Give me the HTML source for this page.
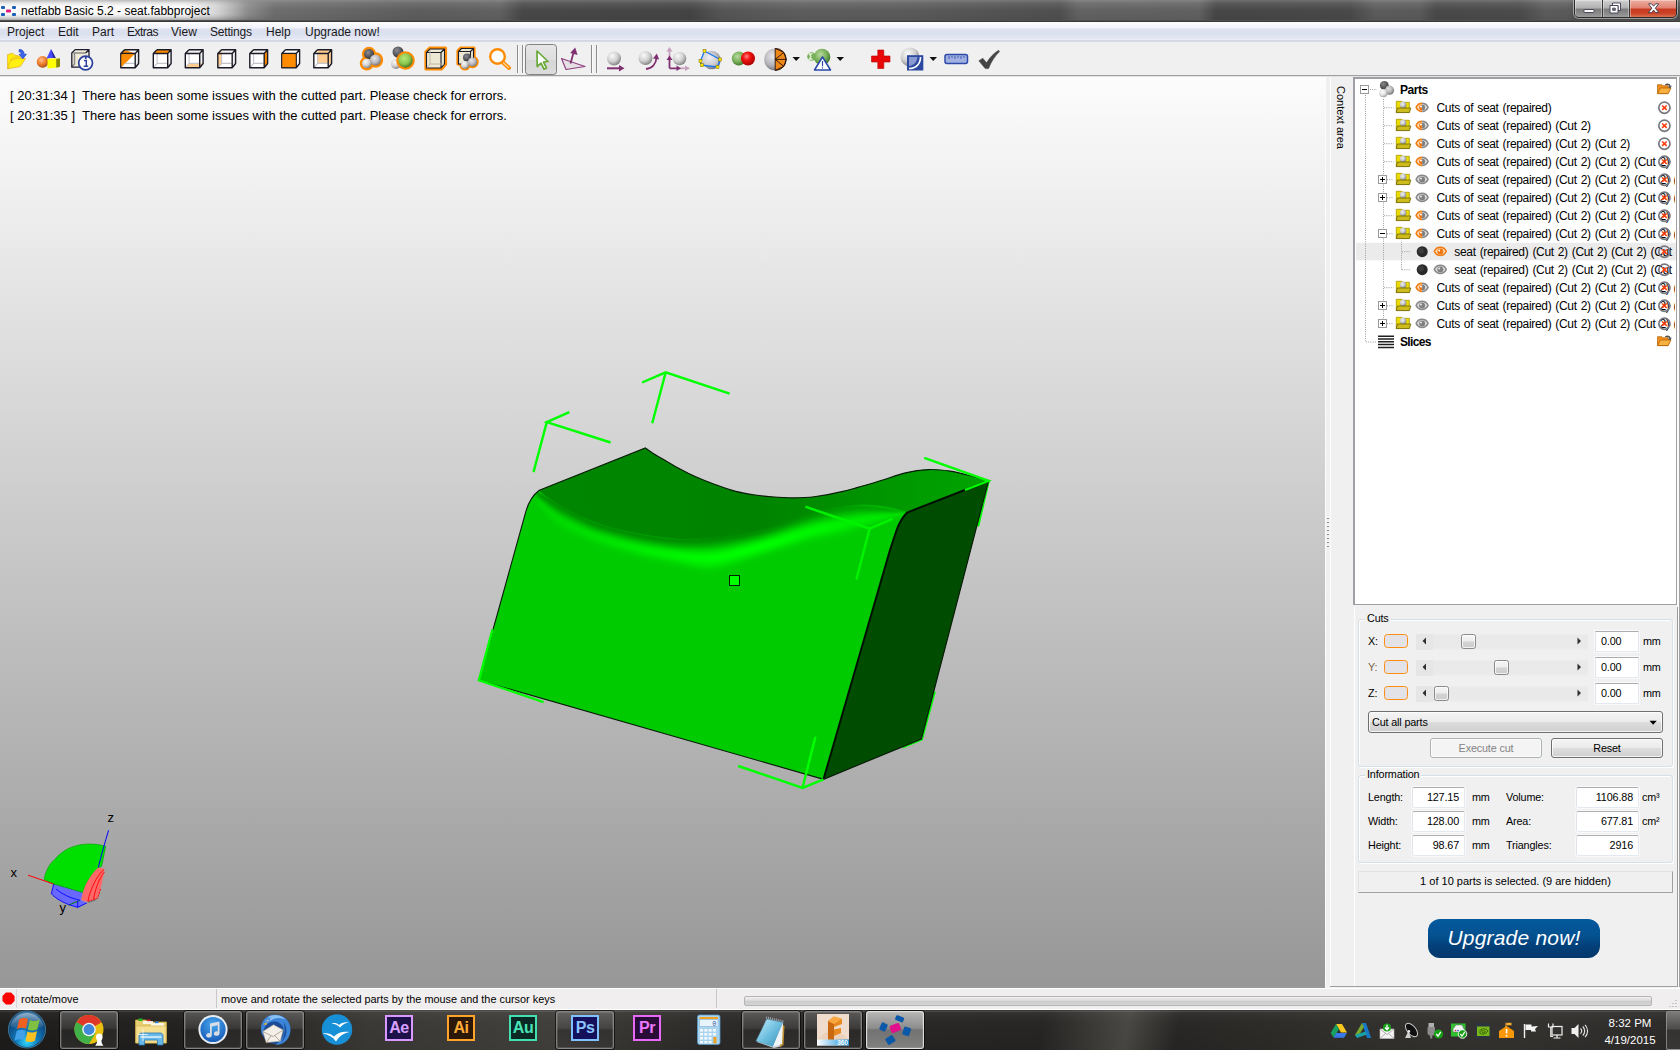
<!DOCTYPE html>
<html><head><meta charset="utf-8"><title>netfabb Basic 5.2 - seat.fabbproject</title>
<style>
*{box-sizing:border-box;margin:0;padding:0}
html,body{width:1680px;height:1050px;overflow:hidden;background:#f0f0f0;font-family:"Liberation Sans",sans-serif;font-size:12px;color:#000}
.abs{position:absolute}
#titlebar{position:absolute;left:0;top:0;width:1680px;height:22px;overflow:hidden;background:linear-gradient(90deg,#909090 0,#8e8e8e 215px,#707070 250px,#686868 330px,#5e5e5e 420px,#626262 500px,#494949 522px,#454545 690px,#565656 722px,#5e5e5e 800px,#5c5c5c 900px,#545454 1000px,#505050 1060px,#636363 1078px,#616161 1200px,#474747 1216px,#4a4a4a 1350px,#5d5d5d 1376px,#5b5b5b 1420px,#4a4a4a 1436px,#4c4c4c 1520px,#5d5d5d 1546px,#5b5b5b 1568px,#4b4b4b 1580px,#505050 1680px)}
#titlebar .shade{position:absolute;left:0;top:0;width:1680px;height:22px;background:linear-gradient(180deg,rgba(255,255,255,.22) 0,rgba(255,255,255,.10) 3px,rgba(255,255,255,0) 10px,rgba(0,0,0,.06) 19px)}#titlebar .glow{position:absolute;left:0;top:0;width:290px;height:20px;background:linear-gradient(90deg,rgba(255,255,255,.95) 0,rgba(255,255,255,.95) 185px,rgba(255,255,255,.62) 218px,rgba(255,255,255,.22) 245px,rgba(255,255,255,0) 275px);-webkit-mask-image:linear-gradient(180deg,rgba(0,0,0,.25) 0,rgba(0,0,0,.8) 3px,#000 6px,#000 14px,rgba(0,0,0,.75) 17px,rgba(0,0,0,.3) 20px);mask-image:linear-gradient(180deg,rgba(0,0,0,.25) 0,rgba(0,0,0,.8) 3px,#000 6px,#000 14px,rgba(0,0,0,.75) 17px,rgba(0,0,0,.3) 20px)}
#titlebar .line{position:absolute;left:0;top:20px;width:1680px;height:2px;background:linear-gradient(180deg,#5a5a5a,#2e2e2e)}
#title{position:absolute;left:21px;top:4px;font-size:12px;letter-spacing:0px;color:#000;white-space:nowrap}
#menubar{position:absolute;left:0;top:22px;width:1680px;height:20px;background:linear-gradient(180deg,#fdfdfe 0,#f1f3fa 6px,#dde1f0 7px,#dbe0ef 12px,#e6e9f5 17px,#eef0f8 18px,#b8bfd0 19px,#f4f4f6 20px)}
#menubar span{position:absolute;top:3px;font-size:12px;white-space:nowrap;color:#1a1a1a}
#toolbar{position:absolute;left:0;top:42px;width:1680px;height:35px;background:#f0f0f0}
#toolbar .bl{position:absolute;left:0;top:33px;width:1680px;height:1px;background:#a0a0a0}
#toolbar .bl2{position:absolute;left:0;top:34px;width:1680px;height:1px;background:#e3e3e3}
#viewport{position:absolute;left:0;top:77px;width:1325px;height:910px;background:linear-gradient(180deg,#fcfcfc 0,#979797 100%);overflow:hidden}
.log{position:absolute;left:10px;font-size:13px;white-space:nowrap;color:#000}
#rpanel{position:absolute;left:1325px;top:77px;width:355px;height:911px;background:#f0f0f0}
#status{position:absolute;left:0;top:987px;width:1680px;height:23px;background:#f0eeee}
#taskbar{position:absolute;left:0;top:1010px;width:1680px;height:40px;background:#1b1917}
</style></head><body>
<div id="titlebar"><div class="shade"></div><div class="glow"></div>
<svg class="abs" style="left:1px;top:5px" width="16" height="12" viewBox="0 0 16 12">
<rect x="0" y="1" width="4" height="3" rx="1" fill="#1d5fb5"/><rect x="11" y="1" width="4" height="3" rx="1" fill="#1d5fb5"/>
<rect x="0" y="8" width="4" height="3" rx="1" fill="#1d5fb5"/><rect x="11" y="8" width="4" height="3" rx="1" fill="#1d5fb5"/>
<rect x="5" y="4.5" width="5" height="3" rx="1" fill="#e0197d"/></svg>
<div id="title">netfabb Basic 5.2 - seat.fabbproject</div>
<div class="line"></div>
<div class="abs" style="left:1574px;top:-1px;width:103px;height:19px;border:1px solid #2a2a2a;border-radius:0 0 5px 5px;box-shadow:0 0 0 1px rgba(255,255,255,.45);overflow:hidden">
<div class="abs" style="left:0;top:0;width:28px;height:18px;background:linear-gradient(180deg,#d0d0d0 0,#b0b0b0 45%,#7c7c7c 50%,#8e8e8e 80%,#a4a4a4 100%);border-right:1px solid #3a3a3a;box-shadow:inset 0 0 0 1px rgba(255,255,255,.35)"></div>
<div class="abs" style="left:28px;top:0;width:27px;height:18px;background:linear-gradient(180deg,#d0d0d0 0,#b0b0b0 45%,#7c7c7c 50%,#8e8e8e 80%,#a4a4a4 100%);border-right:1px solid #3a3a3a;box-shadow:inset 0 0 0 1px rgba(255,255,255,.35)"></div>
<div class="abs" style="left:55px;top:0;width:47px;height:18px;background:linear-gradient(180deg,#eeb0a0 0,#e08070 45%,#c83820 50%,#cc4428 75%,#e08060 100%);box-shadow:inset 0 0 0 1px rgba(255,255,255,.35)"></div>
<svg class="abs" style="left:0;top:0" width="102" height="18" viewBox="1575 0 102 18">
<rect x="1584" y="9.5" width="10" height="3" rx="0.5" fill="#fff" stroke="#3c3c50" stroke-width="0.9"/>
<path d="M1612.5 3 H1620.5 V10.5 H1618 V5.5 H1612.5 Z" fill="#fff" stroke="#3c3c50" stroke-width="0.9"/><path d="M1610 5.5 H1618 V13 H1610 Z M1612.7 8.2 V10.3 H1615.3 V8.2 Z" fill="#fff" fill-rule="evenodd" stroke="#3c3c50" stroke-width="0.9"/>
<path d="M1648.5 3.8 L1651.6 3.8 L1653.6 6.2 L1655.6 3.8 L1658.7 3.8 L1655.3 8.2 L1658.8 12.6 L1655.6 12.6 L1653.6 10.1 L1651.6 12.6 L1648.4 12.6 L1651.9 8.2 Z" fill="#fff" stroke="#3c3c50" stroke-width="0.9" stroke-linejoin="round"/>
</svg></div>
</div>
<div id="menubar">
<span style="left:7px">Project</span><span style="left:58px">Edit</span><span style="left:92px">Part</span><span style="left:127px;letter-spacing:-0.5px">Extras</span><span style="left:171px">View</span><span style="left:210px;letter-spacing:-0.2px">Settings</span><span style="left:266px">Help</span><span style="left:305px">Upgrade now!</span>
</div>
<div id="toolbar"><div class="bl"></div><div class="bl2"></div>
<svg class="abs" style="left:0;top:0" width="1020" height="35" viewBox="0 42 1020 35">
<defs>
<radialGradient id="gsW" cx="0.38" cy="0.32" r="0.72"><stop offset="0" stop-color="#fafafa"/><stop offset="0.55" stop-color="#d0d0d0"/><stop offset="1" stop-color="#7c7c7c"/></radialGradient>
<radialGradient id="gsG" cx="0.4" cy="0.35" r="0.7"><stop offset="0" stop-color="#e8e8ec"/><stop offset="0.6" stop-color="#b4b4ba"/><stop offset="1" stop-color="#6c6c74"/></radialGradient>
<radialGradient id="gsD" cx="0.4" cy="0.35" r="0.7"><stop offset="0" stop-color="#8a8a92"/><stop offset="0.6" stop-color="#55555c"/><stop offset="1" stop-color="#2c2c32"/></radialGradient>
<radialGradient id="gsGreen" cx="0.4" cy="0.35" r="0.7"><stop offset="0" stop-color="#b8e878"/><stop offset="0.55" stop-color="#8cc850"/><stop offset="1" stop-color="#3c6c20"/></radialGradient>
<radialGradient id="gsGreen2" cx="0.4" cy="0.35" r="0.7"><stop offset="0" stop-color="#b8d8a0"/><stop offset="0.55" stop-color="#78b058"/><stop offset="1" stop-color="#3c7028"/></radialGradient>
<radialGradient id="gsRed" cx="0.4" cy="0.35" r="0.7"><stop offset="0" stop-color="#ff8080"/><stop offset="0.4" stop-color="#f01010"/><stop offset="1" stop-color="#a00000"/></radialGradient>
<radialGradient id="gsOr" cx="0.4" cy="0.35" r="0.7"><stop offset="0" stop-color="#ffc090"/><stop offset="0.5" stop-color="#f08030"/><stop offset="1" stop-color="#a04810"/></radialGradient>
<linearGradient id="btnsel" x1="0" y1="0" x2="0" y2="1"><stop offset="0" stop-color="#e6e6e6"/><stop offset="0.5" stop-color="#dedede"/><stop offset="0.5" stop-color="#d6d6d6"/><stop offset="1" stop-color="#dcdcdc"/></linearGradient>
<g id="cube">
<path d="M4.6 5 V14.4 H14.6 M4.6 14.4 L1.4 18.2" fill="none" stroke="#c4c4cc" stroke-width="1.1"/>
<path d="M0.8 4.5 H15.2 V18.8 H0.8 Z M4.5 0.8 H18.6 V14.5 L15.2 18.8 M0.8 4.5 L4.5 0.8 M15.2 4.5 L18.6 0.8" fill="none" stroke="#1c1c28" stroke-width="1.4" stroke-linejoin="round"/>
</g>
</defs>
<!-- open folder -->
<g>
<path d="M7.6 54.6 L12.8 53.2 L14.6 55.2 L20.2 56.2 V60 L9.5 68.6 H7.6 Z" fill="#ffee08" stroke="#e8b428" stroke-width="0.8" stroke-linejoin="round"/>
<path d="M7.6 68.7 L10.6 60.4 L17.5 58.2 L25.6 58.6 L20.2 66.6 Z" fill="#fff010" stroke="#e8b428" stroke-width="0.8" stroke-linejoin="round"/>
<path d="M10.6 60.4 L12 58 L18.5 56.5" fill="none" stroke="#e8b428" stroke-width="0.7"/>
<path d="M19.2 49.6 C22.4 49.4 24 51.2 24 54.2 L26.4 54.2 L22.8 58.8 L19.2 54.2 L21.4 54.2 C21.4 52.6 20.8 52 19.2 52 Z" fill="#3c68f0" stroke="#1838c0" stroke-width="0.7" stroke-linejoin="round"/>
</g>
<!-- shapes -->
<g>
<path d="M51 49 L56 58.5 H46.5 Z" fill="#4848f8"/><path d="M51 49 L56 58.5 H53.5 Z" fill="#282890"/>
<circle cx="42.6" cy="61.8" r="5.9" fill="url(#gsOr)"/>
<path d="M47.5 59 L56.2 58.2 V67.8 L47.5 68.4 Z" fill="#ffff00"/><path d="M56.2 58.2 L60 58.6 V66.8 L56.2 67.8 Z" fill="#888800"/><path d="M47.5 59 L51 58 L60 58.6 L56.2 58.9 Z" fill="#ffff70"/>
</g>
<!-- box info -->
<g>
<path d="M71.8 53 L75.2 49.6 H89 V63.4 L85.4 67.2 H71.8 Z" fill="#f0ecd8"/>
<path d="M73.2 53 H85.6 M74.5 53 V64 L72.2 66.6" fill="none" stroke="#8c8c8c" stroke-width="1.5"/>
<path d="M71.8 53 L75.2 49.6 H89 V63.4 L85.4 67.2 H71.8 Z M85.6 53 L89 49.6" fill="none" stroke="#1c1c30" stroke-width="1.3" stroke-linejoin="round"/>
<circle cx="85.6" cy="63" r="6.9" fill="#fff" stroke="#2c409c" stroke-width="1.7"/>
<path d="M84 60.6 H86.3 V66 M83.6 66.2 H88.2" stroke="#2c409c" stroke-width="1.5" fill="none"/><circle cx="85.8" cy="57.9" r="1.1" fill="#2c409c"/>
</g>
<!-- cubes -->
<g transform="translate(120 49)"><path d="M0.8 4.5 H15.2 V18.8 H0.8 Z" fill="#fff"/><path d="M0.8 4.5 H15.2 L18.6 0.8 H4.5 Z" fill="#fff"/><path d="M0.8 4.5 L4.5 0.8 L15.2 4.5 L0.8 18.8 Z" fill="#ff8c00"/><use href="#cube"/><path d="M1.5 5.2 H13.8 L1.5 17.6 Z" fill="#ff8c00"/></g>
<g transform="translate(152.5 49)"><path d="M0.8 4.5 H15.2 V18.8 H0.8 Z" fill="#fff"/><path d="M0.8 4.5 L4.5 0.8 H18.6 L15.2 4.5 Z" fill="#ff8c00"/><use href="#cube"/></g>
<g transform="translate(184.5 49)"><path d="M0.8 4.5 H15.2 V18.8 H0.8 Z" fill="#fff"/><path d="M0.8 18.8 L4.5 14.5 H18.6 L15.2 18.8 Z" fill="#ffcc90"/><use href="#cube"/></g>
<g transform="translate(217 49)"><path d="M0.8 4.5 H15.2 V18.8 H0.8 Z" fill="#fff"/><path d="M0.8 4.5 L4.5 0.8 V14.5 L0.8 18.8 Z" fill="#ffcc90"/><use href="#cube"/></g>
<g transform="translate(249 49)"><path d="M0.8 4.5 H15.2 V18.8 H0.8 Z" fill="#fff"/><path d="M15.2 4.5 L18.6 0.8 V14.5 L15.2 18.8 Z" fill="#ff8c00"/><use href="#cube"/></g>
<g transform="translate(281 49)"><path d="M0.8 4.5 H15.2 V18.8 H0.8 Z" fill="#ff8c00"/><path d="M0.8 4.5 L4.5 0.8 H18.6 V14.5 L15.2 18.8 V4.5 Z" fill="#fff"/><use href="#cube"/><path d="M1.5 5.2 H14.5 V18.1 H1.5 Z" fill="#ff8c00"/></g>
<g transform="translate(313 49)"><path d="M0.8 4.5 H15.2 V18.8 H0.8 Z" fill="#fff"/><path d="M4.5 0.8 H18.6 V14.5 H4.5 Z" fill="#ffcc90"/><use href="#cube"/></g>
<!-- zoom all: 3 spheres w/ orange outline -->
<g>
<circle cx="369" cy="54" r="7.2" fill="#ff8c00"/><circle cx="375.5" cy="60" r="7.7" fill="#ff8c00"/><circle cx="366.8" cy="63.5" r="7" fill="#ff8c00"/>
<circle cx="369" cy="54" r="5" fill="url(#gsD)"/><circle cx="375.5" cy="60" r="5.5" fill="url(#gsG)"/><circle cx="366.8" cy="63.5" r="4.8" fill="url(#gsW)"/>
</g>
<g>
<circle cx="398" cy="52" r="5.5" fill="url(#gsD)"/><circle cx="396" cy="64" r="5" fill="url(#gsW)"/>
<circle cx="405.5" cy="60.5" r="9.3" fill="#ff8c00"/><circle cx="405.5" cy="60.5" r="7.2" fill="url(#gsGreen)"/>
</g>
<!-- cube orange outline -->
<g>
<path d="M426 52 L430 48 H445.5 V64.5 L441.5 69 H426 Z" fill="#ece8d4" stroke="#ff8c00" stroke-width="3.2" stroke-linejoin="round"/>
<path d="M426.5 52.5 H441 V68 H426.5 Z M426.5 52.5 L430 49 H444.5 V64 L441 68 M441 52.5 L444.5 49" fill="#ece8d4" stroke="#1c1c28" stroke-width="1.1" stroke-linejoin="round"/>
<path d="M430 49.5 V64 H444 M430 64 L427 67.5" fill="none" stroke="#b8b4a0" stroke-width="0.9"/>
</g>
<g>
<path d="M458 51 L461 48 H474 V60 L471 64 H458 Z" fill="#ece8d4" stroke="#ff8c00" stroke-width="3.2" stroke-linejoin="round"/>
<circle cx="467" cy="57.5" r="5.6" fill="#ff8c00"/><circle cx="472.5" cy="62" r="6.2" fill="#ff8c00"/><circle cx="465" cy="65" r="5.6" fill="#ff8c00"/>
<path d="M458.5 51.5 H470.5 V64 H458.5 Z M458.5 51.5 L461.5 48.5 H473.5 V60.5 L470.5 64 M470.5 51.5 L473.5 48.5" fill="#ece8d4" stroke="#1c1c28" stroke-width="1.1" stroke-linejoin="round"/>
<circle cx="467" cy="57.5" r="4" fill="url(#gsD)"/><circle cx="472.5" cy="62" r="4.6" fill="url(#gsG)"/><circle cx="465" cy="65" r="4" fill="url(#gsW)"/>
</g>
<!-- magnifier -->
<g><circle cx="497.5" cy="56.5" r="7.3" fill="#fdfdfb" stroke="#ff8c00" stroke-width="2.4"/><path d="M503 62.5 L509 68" stroke="#ff8c00" stroke-width="4" stroke-linecap="round"/><path d="M503.6 63 L508.6 67.6" stroke="#ffd8a0" stroke-width="1.2" stroke-linecap="round"/></g>
<!-- separators -->
<path d="M517.5 45 V73 M522.5 45 V73" stroke="#8c8c8c" stroke-width="1"/>
<path d="M518.5 45 V73 M523.5 45 V73" stroke="#fafafa" stroke-width="1"/>
<!-- selected btn -->
<rect x="525.5" y="44.5" width="31" height="30" rx="3" fill="url(#btnsel)" stroke="#828282" stroke-width="1"/>
<path d="M537 51 L548 61.5 L543.5 62 L546.5 68 L544 69.2 L541 63.2 L537.2 66.5 Z" fill="#fff" stroke="#68a838" stroke-width="1.7" stroke-linejoin="round"/>
<!-- align -->
<g><path d="M561.5 58.5 L585 66.5 L566 69.5 Z" fill="#e4e0e4" stroke="#904080" stroke-width="1.2" stroke-linejoin="round"/><path d="M570.5 63.5 L574 51" stroke="#803070" stroke-width="1.8"/><path d="M575.2 47.5 L577.6 55 L570.2 53 Z" fill="#803070"/></g>
<path d="M591.5 45 V73 M596.5 45 V73" stroke="#8c8c8c" stroke-width="1"/>
<path d="M592.5 45 V73 M597.5 45 V73" stroke="#fafafa" stroke-width="1"/>
<!-- move -->
<g><circle cx="614" cy="58.5" r="7" fill="url(#gsW)"/><path d="M607 68.3 H620" stroke="#803070" stroke-width="2"/><path d="M619 65 L624.5 68.3 L619 71.5 Z" fill="#803070"/></g>
<!-- rotate -->
<g><circle cx="645.5" cy="58" r="7" fill="url(#gsW)"/><path d="M646 69 C652 68.5 656 64 656.5 58" fill="none" stroke="#803070" stroke-width="1.8"/><path d="M653 58.5 L656.8 53.5 L659.2 59.5 Z" fill="#803070"/></g>
<!-- scale -->
<g><path d="M669.5 58 V50" stroke="#c8a0c0" stroke-width="1.8"/><path d="M666.5 51.5 L669.5 47 L672.5 51.5 Z" fill="#c8a0c0"/><path d="M678 68.3 H686" stroke="#c8a0c0" stroke-width="1.8"/><path d="M685 65.5 L690 68.3 L685 71 Z" fill="#c8a0c0"/>
<circle cx="679.5" cy="58.5" r="6.8" fill="url(#gsW)"/>
<path d="M669.5 68.3 V59 M669.5 68.3 H678" stroke="#803070" stroke-width="1.8" fill="none"/><path d="M666.5 60 L669.5 55.5 L672.5 60 Z" fill="#803070"/><path d="M676.5 65.5 L681 68.3 L676.5 71 Z" fill="#803070"/></g>
<!-- polygon select -->
<g><circle cx="711.5" cy="60" r="9.3" fill="url(#gsG)"/><path d="M704.5 51 L720 59.5 L717.5 67 L702 65.2 L700.5 61 Z" fill="rgba(255,255,255,.35)" stroke="#1878f0" stroke-width="1.3"/>
<g fill="#f8e800" stroke="#806800" stroke-width="0.5"><rect x="703" y="49.5" width="3" height="3"/><rect x="718.5" y="58" width="3" height="3"/><rect x="716" y="65.5" width="3" height="3"/><rect x="700.5" y="63.7" width="3" height="3"/><rect x="699" y="59.5" width="3" height="3"/></g></g>
<!-- green red -->
<g><circle cx="738.8" cy="58.5" r="7" fill="url(#gsGreen2)"/><circle cx="748" cy="58.5" r="7" fill="url(#gsRed)"/></g>
<!-- half sphere orange -->
<g><circle cx="775.2" cy="59.4" r="11" fill="url(#gsG)"/><path d="M775.2 48.4 A11 11 0 0 1 775.2 70.4 Z" fill="#f08818"/><path d="M775.2 48.4 V70.4 M775.2 48.4 A11 11 0 0 1 775.2 70.4 M775.2 59.4 L783.8 52.4 M775.2 59.4 L786.2 59.4 M775.2 59.4 L783.8 66.4 M775.2 48.4 L783.8 52.4 L786.2 59.4 L783.8 66.4 L775.2 70.4" fill="none" stroke="#201008" stroke-width="0.9"/></g>
<path d="M792.5 57 H800 L796.2 61 Z" fill="#101010"/>
<!-- green sphere warn -->
<g><circle cx="822" cy="57" r="8.3" fill="url(#gsGreen2)"/><circle cx="811.5" cy="56.5" r="4.3" fill="#78b058"/><path d="M812.5 53.8 H809.2 L811 56.5 L809.2 59.2 H812.5" fill="none" stroke="#f0f8e8" stroke-width="1.2"/><path d="M822.5 57 L830.5 70 H814.5 Z" fill="#fff" stroke="#2848a8" stroke-width="1.5" stroke-linejoin="round"/><path d="M822.5 61 V66.2 M822.5 67.3 V68.6" stroke="#2848a8" stroke-width="1.2"/></g>
<path d="M836.5 57 H844 L840.2 61 Z" fill="#101010"/>
<!-- red cross -->
<path d="M877.8 50 H883.8 V56 H890 V62 H883.8 V68.5 H877.8 V62 H871.5 V56 H877.8 Z" fill="#e80808" stroke="#b80000" stroke-width="0.6"/>
<!-- sphere blue square -->
<g><circle cx="910" cy="57" r="9.5" fill="url(#gsW)"/><rect x="907" y="55.2" width="16.3" height="15.3" fill="#2c48a0"/><path d="M909 68.5 C916 68.5 920.5 64 920.5 57" fill="none" stroke="#fff" stroke-width="1.6"/><path d="M909 57 H917.5 C917 62 914 65.5 909 66 Z" fill="#8898d0"/></g>
<path d="M929.5 57 H937 L933.2 61 Z" fill="#101010"/>
<!-- ruler -->
<g><rect x="945" y="54.6" width="22.5" height="9" rx="2" fill="#a0b0e0" stroke="#2c48a8" stroke-width="1.5"/><path d="M949 56 V59 M952 56 V58 M955 56 V59 M958 56 V58 M961 56 V59 M964 56 V58" stroke="#2c48a8" stroke-width="0.8"/></g>
<!-- check -->
<path d="M978.8 60.8 L982.8 58.2 L986.6 62.8 C989.6 57.5 993.6 53.2 998.6 50.2 L999.6 51.6 C995 56 991 62 988.6 68.6 L985.2 68.6 Z" fill="#444" stroke="#444" stroke-width="0.5" stroke-linejoin="round"/>
</svg>
</div>
<div id="viewport">
<div class="log" style="top:11px">[ 20:31:34 ]&nbsp; There has been some issues with the cutted part. Please check for errors.</div>
<div class="log" style="top:31px">[ 20:31:35 ]&nbsp; There has been some issues with the cutted part. Please check for errors.</div>
<svg class="abs" style="left:0;top:0" width="1325" height="910" viewBox="0 77 1325 910">
<defs>
<clipPath id="mclip"><path id="sil" d="M539.3 490.3 L645.4 447.9 C647.0 449.0 651.6 452.4 655.0 454.5 C658.4 456.6 661.5 458.3 665.7 460.7 C669.9 463.1 675.0 466.3 680.0 469.0 C685.0 471.7 689.9 474.2 695.7 476.8 C701.5 479.4 708.3 482.1 715.0 484.5 C721.7 486.9 729.0 489.6 735.7 491.4 C742.4 493.1 749.0 494.1 755.0 495.0 C761.0 495.9 765.1 496.3 771.4 496.8 C777.7 497.3 785.8 497.9 792.9 497.9 C800.0 497.9 806.0 497.9 814.3 496.8 C822.6 495.7 832.2 494.0 842.9 491.4 C853.6 488.8 868.2 484.4 878.6 481.3 C889.0 478.2 897.1 474.8 905.4 472.9 C913.7 470.9 921.2 469.9 928.6 469.6 C936.0 469.3 942.9 470.1 950.0 471.1 C957.1 472.2 965.0 474.3 971.4 475.9 C977.8 477.5 985.7 480.0 988.6 480.8 L962.8 580 L921.4 739 L823.5 779.3 L478.9 680.3 L506 583 L525.4 513.2 C528 503 533 495 539.3 490.3 Z"/></clipPath>
<filter id="bl1" x="-5%" y="-5%" width="110%" height="110%"><feGaussianBlur stdDeviation="0.9"/></filter><filter id="bl3" x="-10%" y="-10%" width="120%" height="120%"><feGaussianBlur stdDeviation="3"/></filter>
<filter id="bl2" x="-10%" y="-10%" width="120%" height="120%"><feGaussianBlur stdDeviation="1.6"/></filter>
<filter id="bl5" x="-10%" y="-10%" width="120%" height="120%"><feGaussianBlur stdDeviation="5"/></filter>
<linearGradient id="topg" x1="540" y1="0" x2="990" y2="0" gradientUnits="userSpaceOnUse"><stop offset="0" stop-color="#008600"/><stop offset="0.5" stop-color="#008400"/><stop offset="0.68" stop-color="#009000"/><stop offset="0.85" stop-color="#009c00"/><stop offset="1" stop-color="#00a400"/></linearGradient>
<linearGradient id="bg0" x1="537" y1="0" x2="907" y2="0" gradientUnits="userSpaceOnUse"><stop offset="0.000" stop-color="rgb(0,135,0)"/><stop offset="0.170" stop-color="rgb(0,135,0)"/><stop offset="0.305" stop-color="rgb(0,135,0)"/><stop offset="0.441" stop-color="rgb(0,135,0)"/><stop offset="0.603" stop-color="rgb(0,135,0)"/><stop offset="0.792" stop-color="rgb(0,147,0)"/><stop offset="1.000" stop-color="rgb(0,161,0)"/></linearGradient><linearGradient id="bg1" x1="537" y1="0" x2="907" y2="0" gradientUnits="userSpaceOnUse"><stop offset="0.000" stop-color="rgb(0,141,0)"/><stop offset="0.170" stop-color="rgb(0,142,0)"/><stop offset="0.305" stop-color="rgb(0,144,0)"/><stop offset="0.441" stop-color="rgb(0,145,0)"/><stop offset="0.603" stop-color="rgb(0,145,0)"/><stop offset="0.792" stop-color="rgb(0,155,0)"/><stop offset="1.000" stop-color="rgb(0,166,0)"/></linearGradient><linearGradient id="bg2" x1="537" y1="0" x2="907" y2="0" gradientUnits="userSpaceOnUse"><stop offset="0.000" stop-color="rgb(0,153,0)"/><stop offset="0.170" stop-color="rgb(0,155,0)"/><stop offset="0.305" stop-color="rgb(0,158,0)"/><stop offset="0.441" stop-color="rgb(0,161,0)"/><stop offset="0.603" stop-color="rgb(0,162,0)"/><stop offset="0.792" stop-color="rgb(0,168,0)"/><stop offset="1.000" stop-color="rgb(0,175,0)"/></linearGradient><linearGradient id="bg3" x1="537" y1="0" x2="907" y2="0" gradientUnits="userSpaceOnUse"><stop offset="0.000" stop-color="rgb(0,167,0)"/><stop offset="0.170" stop-color="rgb(0,171,0)"/><stop offset="0.305" stop-color="rgb(0,177,0)"/><stop offset="0.441" stop-color="rgb(0,181,0)"/><stop offset="0.603" stop-color="rgb(0,183,0)"/><stop offset="0.792" stop-color="rgb(0,186,0)"/><stop offset="1.000" stop-color="rgb(0,187,0)"/></linearGradient><linearGradient id="bg4" x1="537" y1="0" x2="907" y2="0" gradientUnits="userSpaceOnUse"><stop offset="0.000" stop-color="rgb(0,181,0)"/><stop offset="0.170" stop-color="rgb(0,189,0)"/><stop offset="0.305" stop-color="rgb(0,196,0)"/><stop offset="0.441" stop-color="rgb(0,203,0)"/><stop offset="0.603" stop-color="rgb(0,206,0)"/><stop offset="0.792" stop-color="rgb(0,204,0)"/><stop offset="1.000" stop-color="rgb(0,199,0)"/></linearGradient><linearGradient id="bg5" x1="537" y1="0" x2="907" y2="0" gradientUnits="userSpaceOnUse"><stop offset="0.000" stop-color="rgb(0,195,0)"/><stop offset="0.170" stop-color="rgb(0,205,0)"/><stop offset="0.305" stop-color="rgb(0,215,0)"/><stop offset="0.441" stop-color="rgb(0,224,0)"/><stop offset="0.603" stop-color="rgb(0,227,0)"/><stop offset="0.792" stop-color="rgb(0,221,0)"/><stop offset="1.000" stop-color="rgb(0,211,0)"/></linearGradient><linearGradient id="bg6" x1="537" y1="0" x2="907" y2="0" gradientUnits="userSpaceOnUse"><stop offset="0.000" stop-color="rgb(0,207,0)"/><stop offset="0.170" stop-color="rgb(0,218,0)"/><stop offset="0.305" stop-color="rgb(0,230,0)"/><stop offset="0.441" stop-color="rgb(0,240,0)"/><stop offset="0.603" stop-color="rgb(0,244,0)"/><stop offset="0.792" stop-color="rgb(0,235,0)"/><stop offset="1.000" stop-color="rgb(0,220,0)"/></linearGradient><linearGradient id="bg7" x1="537" y1="0" x2="907" y2="0" gradientUnits="userSpaceOnUse"><stop offset="0.000" stop-color="rgb(0,213,0)"/><stop offset="0.170" stop-color="rgb(0,225,0)"/><stop offset="0.305" stop-color="rgb(0,238,0)"/><stop offset="0.441" stop-color="rgb(0,249,0)"/><stop offset="0.603" stop-color="rgb(0,254,0)"/><stop offset="0.792" stop-color="rgb(0,243,0)"/><stop offset="1.000" stop-color="rgb(0,225,0)"/></linearGradient><linearGradient id="bg8" x1="537" y1="0" x2="907" y2="0" gradientUnits="userSpaceOnUse"><stop offset="0.000" stop-color="rgb(0,214,0)"/><stop offset="0.170" stop-color="rgb(0,226,0)"/><stop offset="0.305" stop-color="rgb(0,239,0)"/><stop offset="0.441" stop-color="rgb(0,250,0)"/><stop offset="0.603" stop-color="rgb(0,254,0)"/><stop offset="0.792" stop-color="rgb(0,243,0)"/><stop offset="1.000" stop-color="rgb(0,226,0)"/></linearGradient><linearGradient id="bg9" x1="537" y1="0" x2="907" y2="0" gradientUnits="userSpaceOnUse"><stop offset="0.000" stop-color="rgb(0,212,0)"/><stop offset="0.170" stop-color="rgb(0,223,0)"/><stop offset="0.305" stop-color="rgb(0,234,0)"/><stop offset="0.441" stop-color="rgb(0,243,0)"/><stop offset="0.603" stop-color="rgb(0,247,0)"/><stop offset="0.792" stop-color="rgb(0,238,0)"/><stop offset="1.000" stop-color="rgb(0,223,0)"/></linearGradient><linearGradient id="bg10" x1="537" y1="0" x2="907" y2="0" gradientUnits="userSpaceOnUse"><stop offset="0.000" stop-color="rgb(0,210,0)"/><stop offset="0.170" stop-color="rgb(0,218,0)"/><stop offset="0.305" stop-color="rgb(0,226,0)"/><stop offset="0.441" stop-color="rgb(0,233,0)"/><stop offset="0.603" stop-color="rgb(0,236,0)"/><stop offset="0.792" stop-color="rgb(0,229,0)"/><stop offset="1.000" stop-color="rgb(0,218,0)"/></linearGradient><linearGradient id="bg11" x1="537" y1="0" x2="907" y2="0" gradientUnits="userSpaceOnUse"><stop offset="0.000" stop-color="rgb(0,208,0)"/><stop offset="0.170" stop-color="rgb(0,212,0)"/><stop offset="0.305" stop-color="rgb(0,217,0)"/><stop offset="0.441" stop-color="rgb(0,222,0)"/><stop offset="0.603" stop-color="rgb(0,223,0)"/><stop offset="0.792" stop-color="rgb(0,219,0)"/><stop offset="1.000" stop-color="rgb(0,212,0)"/></linearGradient><linearGradient id="bg12" x1="537" y1="0" x2="907" y2="0" gradientUnits="userSpaceOnUse"><stop offset="0.000" stop-color="rgb(0,206,0)"/><stop offset="0.170" stop-color="rgb(0,207,0)"/><stop offset="0.305" stop-color="rgb(0,210,0)"/><stop offset="0.441" stop-color="rgb(0,211,0)"/><stop offset="0.603" stop-color="rgb(0,212,0)"/><stop offset="0.792" stop-color="rgb(0,210,0)"/><stop offset="1.000" stop-color="rgb(0,207,0)"/></linearGradient><linearGradient id="bg13" x1="537" y1="0" x2="907" y2="0" gradientUnits="userSpaceOnUse"><stop offset="0.000" stop-color="rgb(0,204,0)"/><stop offset="0.170" stop-color="rgb(0,204,0)"/><stop offset="0.305" stop-color="rgb(0,205,0)"/><stop offset="0.441" stop-color="rgb(0,205,0)"/><stop offset="0.603" stop-color="rgb(0,205,0)"/><stop offset="0.792" stop-color="rgb(0,205,0)"/><stop offset="1.000" stop-color="rgb(0,204,0)"/></linearGradient></defs>
<path d="M988.7 480.8 L978 526.4 M934.7 691.5 L921.8 739.4 L902.3 747.5" fill="none" stroke="#00ff00" stroke-width="2.4"/>
<g clip-path="url(#mclip)">
<rect x="470" y="440" width="530" height="350" fill="#00cb00"/>
<!-- top surface -->
<path d="M530 440 H1000 V500 L907 512.5 C895 508 875 504 858 505 C845 506 830 509 815 513 C795 520 775 528 750 533 C730 537 700 540 680 539 C660 538 620 531 600 524 C580 517 560 507 539 491 Z" fill="url(#topg)"/>
<!-- transition -->
<g filter="url(#bl1)">
<path d="M537.0 491.7 L542.0 494.4 L547.0 497.1 L552.0 500.1 L557.0 503.0 L562.0 505.8 L567.0 508.5 L572.0 511.2 L577.0 513.7 L582.0 516.2 L587.0 518.7 L592.0 520.9 L597.0 522.7 L602.0 524.3 L607.0 525.8 L612.0 527.1 L617.0 528.5 L622.0 529.7 L627.0 530.9 L632.0 532.1 L637.0 533.1 L642.0 534.1 L647.0 535.0 L652.0 535.8 L657.0 536.6 L662.0 537.2 L667.0 537.8 L672.0 538.3 L677.0 538.6 L682.0 538.7 L687.0 538.8 L692.0 538.6 L697.0 538.4 L702.0 538.0 L707.0 537.6 L712.0 537.1 L717.0 536.5 L722.0 536.0 L727.0 535.4 L732.0 534.7 L737.0 534.1 L742.0 533.3 L747.0 532.4 L752.0 531.5 L757.0 530.4 L762.0 529.2 L767.0 527.8 L772.0 526.2 L777.0 524.6 L782.0 522.8 L787.0 521.1 L792.0 519.3 L797.0 517.7 L802.0 516.1 L807.0 514.5 L812.0 512.9 L817.0 511.4 L822.0 510.0 L827.0 508.8 L832.0 507.8 L837.0 507.0 L842.0 506.3 L847.0 505.8 L852.0 505.4 L857.0 505.2 L862.0 505.2 L867.0 505.5 L872.0 506.1 L877.0 506.7 L882.0 507.5 L887.0 508.2 L892.0 509.0 L897.0 509.9 L902.0 511.0 L907.0 512.2 L907.0 513.1 L902.0 512.2 L897.0 511.3 L892.0 510.6 L887.0 510.0 L882.0 509.4 L877.0 508.9 L872.0 508.4 L867.0 508.1 L862.0 507.9 L857.0 508.0 L852.0 508.3 L847.0 508.7 L842.0 509.3 L837.0 510.1 L832.0 510.9 L827.0 511.9 L822.0 513.1 L817.0 514.5 L812.0 516.0 L807.0 517.5 L802.0 519.1 L797.0 520.6 L792.0 522.3 L787.0 524.1 L782.0 525.8 L777.0 527.5 L772.0 529.1 L767.0 530.7 L762.0 532.1 L757.0 533.3 L752.0 534.5 L747.0 535.5 L742.0 536.4 L737.0 537.2 L732.0 538.0 L727.0 538.7 L722.0 539.3 L717.0 540.0 L712.0 540.5 L707.0 541.0 L702.0 541.3 L697.0 541.6 L692.0 541.8 L687.0 541.8 L682.0 541.7 L677.0 541.5 L672.0 541.1 L667.0 540.6 L662.0 540.0 L657.0 539.3 L652.0 538.5 L647.0 537.7 L642.0 536.8 L637.0 535.8 L632.0 534.7 L627.0 533.6 L622.0 532.3 L617.0 531.1 L612.0 529.7 L607.0 528.3 L602.0 526.9 L597.0 525.3 L592.0 523.4 L587.0 521.2 L582.0 518.8 L577.0 516.4 L572.0 513.8 L567.0 511.2 L562.0 508.5 L557.0 505.7 L552.0 502.6 L547.0 499.5 L542.0 496.5 L537.0 493.5 Z" fill="url(#bg0)"/>
<path d="M537.0 492.7 L542.0 495.7 L547.0 498.7 L552.0 501.8 L557.0 504.9 L562.0 507.7 L567.0 510.4 L572.0 513.0 L577.0 515.6 L582.0 518.0 L587.0 520.4 L592.0 522.6 L597.0 524.5 L602.0 526.1 L607.0 527.5 L612.0 528.9 L617.0 530.3 L622.0 531.5 L627.0 532.8 L632.0 533.9 L637.0 535.0 L642.0 536.0 L647.0 536.9 L652.0 537.7 L657.0 538.5 L662.0 539.2 L667.0 539.8 L672.0 540.3 L677.0 540.7 L682.0 540.9 L687.0 541.0 L692.0 541.0 L697.0 540.8 L702.0 540.5 L707.0 540.2 L712.0 539.7 L717.0 539.2 L722.0 538.5 L727.0 537.9 L732.0 537.2 L737.0 536.4 L742.0 535.6 L747.0 534.7 L752.0 533.7 L757.0 532.5 L762.0 531.3 L767.0 529.9 L772.0 528.3 L777.0 526.7 L782.0 525.0 L787.0 523.3 L792.0 521.5 L797.0 519.8 L802.0 518.3 L807.0 516.7 L812.0 515.2 L817.0 513.7 L822.0 512.3 L827.0 511.1 L832.0 510.1 L837.0 509.3 L842.0 508.5 L847.0 507.9 L852.0 507.5 L857.0 507.2 L862.0 507.1 L867.0 507.3 L872.0 507.6 L877.0 508.1 L882.0 508.6 L887.0 509.2 L892.0 509.8 L897.0 510.5 L902.0 511.4 L907.0 512.3 L907.0 513.2 L902.0 512.6 L897.0 511.9 L892.0 511.4 L887.0 511.0 L882.0 510.6 L877.0 510.2 L872.0 509.9 L867.0 509.8 L862.0 509.8 L857.0 510.0 L852.0 510.4 L847.0 510.9 L842.0 511.6 L837.0 512.4 L832.0 513.3 L827.0 514.2 L822.0 515.4 L817.0 516.7 L812.0 518.2 L807.0 519.7 L802.0 521.2 L797.0 522.8 L792.0 524.5 L787.0 526.2 L782.0 528.0 L777.0 529.6 L772.0 531.3 L767.0 532.8 L762.0 534.2 L757.0 535.5 L752.0 536.7 L747.0 537.7 L742.0 538.7 L737.0 539.6 L732.0 540.4 L727.0 541.2 L722.0 541.9 L717.0 542.6 L712.0 543.1 L707.0 543.6 L702.0 543.9 L697.0 544.1 L692.0 544.1 L687.0 544.0 L682.0 543.9 L677.0 543.6 L672.0 543.1 L667.0 542.6 L662.0 542.0 L657.0 541.2 L652.0 540.4 L647.0 539.6 L642.0 538.6 L637.0 537.6 L632.0 536.5 L627.0 535.4 L622.0 534.1 L617.0 532.8 L612.0 531.5 L607.0 530.1 L602.0 528.6 L597.0 527.0 L592.0 525.2 L587.0 523.0 L582.0 520.6 L577.0 518.2 L572.0 515.7 L567.0 513.1 L562.0 510.4 L557.0 507.5 L552.0 504.3 L547.0 501.0 L542.0 497.8 L537.0 494.5 Z" fill="url(#bg1)"/>
<path d="M537.0 493.7 L542.0 497.0 L547.0 500.2 L552.0 503.5 L557.0 506.7 L562.0 509.6 L567.0 512.3 L572.0 514.9 L577.0 517.4 L582.0 519.8 L587.0 522.2 L592.0 524.4 L597.0 526.2 L602.0 527.8 L607.0 529.3 L612.0 530.7 L617.0 532.0 L622.0 533.3 L627.0 534.6 L632.0 535.7 L637.0 536.8 L642.0 537.8 L647.0 538.8 L652.0 539.6 L657.0 540.4 L662.0 541.2 L667.0 541.8 L672.0 542.3 L677.0 542.8 L682.0 543.1 L687.0 543.2 L692.0 543.3 L697.0 543.3 L702.0 543.1 L707.0 542.8 L712.0 542.3 L717.0 541.8 L722.0 541.1 L727.0 540.4 L732.0 539.6 L737.0 538.8 L742.0 537.9 L747.0 536.9 L752.0 535.9 L757.0 534.7 L762.0 533.4 L767.0 532.0 L772.0 530.5 L777.0 528.8 L782.0 527.2 L787.0 525.4 L792.0 523.7 L797.0 522.0 L802.0 520.4 L807.0 518.9 L812.0 517.4 L817.0 515.9 L822.0 514.6 L827.0 513.4 L832.0 512.5 L837.0 511.6 L842.0 510.8 L847.0 510.1 L852.0 509.6 L857.0 509.2 L862.0 509.0 L867.0 509.0 L872.0 509.1 L877.0 509.4 L882.0 509.8 L887.0 510.2 L892.0 510.6 L897.0 511.1 L902.0 511.8 L907.0 512.5 L907.0 513.4 L902.0 512.9 L897.0 512.5 L892.0 512.2 L887.0 512.0 L882.0 511.8 L877.0 511.6 L872.0 511.5 L867.0 511.5 L862.0 511.6 L857.0 512.0 L852.0 512.5 L847.0 513.1 L842.0 513.8 L837.0 514.7 L832.0 515.6 L827.0 516.6 L822.0 517.7 L817.0 519.0 L812.0 520.4 L807.0 521.9 L802.0 523.4 L797.0 525.0 L792.0 526.7 L787.0 528.4 L782.0 530.1 L777.0 531.8 L772.0 533.4 L767.0 534.9 L762.0 536.3 L757.0 537.6 L752.0 538.8 L747.0 540.0 L742.0 541.0 L737.0 541.9 L732.0 542.9 L727.0 543.7 L722.0 544.5 L717.0 545.2 L712.0 545.7 L707.0 546.2 L702.0 546.4 L697.0 546.5 L692.0 546.4 L687.0 546.3 L682.0 546.0 L677.0 545.6 L672.0 545.2 L667.0 544.6 L662.0 543.9 L657.0 543.2 L652.0 542.4 L647.0 541.5 L642.0 540.5 L637.0 539.5 L632.0 538.4 L627.0 537.2 L622.0 535.9 L617.0 534.6 L612.0 533.3 L607.0 531.8 L602.0 530.4 L597.0 528.8 L592.0 527.0 L587.0 524.8 L582.0 522.4 L577.0 520.0 L572.0 517.6 L567.0 515.0 L562.0 512.3 L557.0 509.3 L552.0 506.0 L547.0 502.6 L542.0 499.1 L537.0 495.5 Z" fill="url(#bg2)"/>
<path d="M537.0 494.7 L542.0 498.3 L547.0 501.8 L552.0 505.2 L557.0 508.5 L562.0 511.5 L567.0 514.2 L572.0 516.8 L577.0 519.2 L582.0 521.6 L587.0 524.0 L592.0 526.2 L597.0 528.0 L602.0 529.6 L607.0 531.0 L612.0 532.5 L617.0 533.8 L622.0 535.1 L627.0 536.4 L632.0 537.6 L637.0 538.7 L642.0 539.7 L647.0 540.7 L652.0 541.6 L657.0 542.4 L662.0 543.1 L667.0 543.8 L672.0 544.4 L677.0 544.8 L682.0 545.2 L687.0 545.5 L692.0 545.6 L697.0 545.7 L702.0 545.6 L707.0 545.4 L712.0 544.9 L717.0 544.4 L722.0 543.7 L727.0 542.9 L732.0 542.1 L737.0 541.1 L742.0 540.2 L747.0 539.2 L752.0 538.0 L757.0 536.8 L762.0 535.5 L767.0 534.1 L772.0 532.6 L777.0 531.0 L782.0 529.3 L787.0 527.6 L792.0 525.9 L797.0 524.2 L802.0 522.6 L807.0 521.1 L812.0 519.6 L817.0 518.2 L822.0 516.9 L827.0 515.8 L832.0 514.8 L837.0 513.9 L842.0 513.0 L847.0 512.3 L852.0 511.7 L857.0 511.2 L862.0 510.8 L867.0 510.7 L872.0 510.7 L877.0 510.8 L882.0 511.0 L887.0 511.2 L892.0 511.4 L897.0 511.7 L902.0 512.1 L907.0 512.6 L907.0 513.5 L902.0 513.3 L897.0 513.1 L892.0 513.0 L887.0 512.9 L882.0 512.9 L877.0 512.9 L872.0 513.0 L867.0 513.2 L862.0 513.5 L857.0 514.0 L852.0 514.6 L847.0 515.3 L842.0 516.1 L837.0 517.0 L832.0 517.9 L827.0 518.9 L822.0 520.0 L817.0 521.2 L812.0 522.6 L807.0 524.1 L802.0 525.6 L797.0 527.2 L792.0 528.9 L787.0 530.6 L782.0 532.3 L777.0 533.9 L772.0 535.5 L767.0 537.0 L762.0 538.4 L757.0 539.8 L752.0 541.0 L747.0 542.2 L742.0 543.3 L737.0 544.3 L732.0 545.3 L727.0 546.2 L722.0 547.1 L717.0 547.8 L712.0 548.4 L707.0 548.7 L702.0 548.9 L697.0 548.9 L692.0 548.8 L687.0 548.5 L682.0 548.2 L677.0 547.7 L672.0 547.2 L667.0 546.6 L662.0 545.9 L657.0 545.1 L652.0 544.3 L647.0 543.4 L642.0 542.4 L637.0 541.4 L632.0 540.2 L627.0 539.0 L622.0 537.7 L617.0 536.4 L612.0 535.0 L607.0 533.6 L602.0 532.1 L597.0 530.5 L592.0 528.7 L587.0 526.6 L582.0 524.2 L577.0 521.8 L572.0 519.4 L567.0 516.9 L562.0 514.2 L557.0 511.2 L552.0 507.7 L547.0 504.1 L542.0 500.5 L537.0 496.6 Z" fill="url(#bg3)"/>
<path d="M537.0 495.8 L542.0 499.7 L547.0 503.3 L552.0 506.9 L557.0 510.4 L562.0 513.4 L567.0 516.1 L572.0 518.6 L577.0 521.0 L582.0 523.4 L587.0 525.8 L592.0 527.9 L597.0 529.7 L602.0 531.3 L607.0 532.8 L612.0 534.2 L617.0 535.6 L622.0 536.9 L627.0 538.2 L632.0 539.4 L637.0 540.6 L642.0 541.6 L647.0 542.6 L652.0 543.5 L657.0 544.3 L662.0 545.1 L667.0 545.8 L672.0 546.4 L677.0 546.9 L682.0 547.4 L687.0 547.7 L692.0 548.0 L697.0 548.1 L702.0 548.1 L707.0 547.9 L712.0 547.6 L717.0 547.0 L722.0 546.3 L727.0 545.4 L732.0 544.5 L737.0 543.5 L742.0 542.5 L747.0 541.4 L752.0 540.2 L757.0 539.0 L762.0 537.6 L767.0 536.2 L772.0 534.7 L777.0 533.1 L782.0 531.5 L787.0 529.8 L792.0 528.1 L797.0 526.4 L802.0 524.8 L807.0 523.3 L812.0 521.8 L817.0 520.4 L822.0 519.2 L827.0 518.1 L832.0 517.1 L837.0 516.2 L842.0 515.3 L847.0 514.5 L852.0 513.8 L857.0 513.2 L862.0 512.7 L867.0 512.4 L872.0 512.2 L877.0 512.1 L882.0 512.1 L887.0 512.1 L892.0 512.2 L897.0 512.3 L902.0 512.5 L907.0 512.7 L907.0 513.6 L902.0 513.6 L897.0 513.7 L892.0 513.8 L887.0 513.9 L882.0 514.1 L877.0 514.3 L872.0 514.5 L867.0 514.9 L862.0 515.4 L857.0 516.0 L852.0 516.7 L847.0 517.5 L842.0 518.3 L837.0 519.2 L832.0 520.2 L827.0 521.2 L822.0 522.3 L817.0 523.5 L812.0 524.8 L807.0 526.3 L802.0 527.8 L797.0 529.4 L792.0 531.1 L787.0 532.8 L782.0 534.4 L777.0 536.0 L772.0 537.6 L767.0 539.1 L762.0 540.5 L757.0 541.9 L752.0 543.2 L747.0 544.4 L742.0 545.6 L737.0 546.7 L732.0 547.7 L727.0 548.7 L722.0 549.7 L717.0 550.4 L712.0 551.0 L707.0 551.3 L702.0 551.5 L697.0 551.4 L692.0 551.1 L687.0 550.8 L682.0 550.3 L677.0 549.8 L672.0 549.2 L667.0 548.6 L662.0 547.9 L657.0 547.1 L652.0 546.2 L647.0 545.3 L642.0 544.3 L637.0 543.2 L632.0 542.1 L627.0 540.8 L622.0 539.6 L617.0 538.2 L612.0 536.8 L607.0 535.4 L602.0 533.9 L597.0 532.3 L592.0 530.5 L587.0 528.3 L582.0 526.0 L577.0 523.7 L572.0 521.3 L567.0 518.8 L562.0 516.0 L557.0 513.0 L552.0 509.5 L547.0 505.7 L542.0 501.8 L537.0 497.6 Z" fill="url(#bg4)"/>
<path d="M537.0 496.8 L542.0 501.0 L547.0 504.9 L552.0 508.7 L557.0 512.2 L562.0 515.2 L567.0 518.0 L572.0 520.5 L577.0 522.9 L582.0 525.2 L587.0 527.5 L592.0 529.7 L597.0 531.5 L602.0 533.1 L607.0 534.6 L612.0 536.0 L617.0 537.4 L622.0 538.8 L627.0 540.0 L632.0 541.3 L637.0 542.4 L642.0 543.5 L647.0 544.5 L652.0 545.4 L657.0 546.3 L662.0 547.1 L667.0 547.8 L672.0 548.4 L677.0 549.0 L682.0 549.5 L687.0 550.0 L692.0 550.3 L697.0 550.6 L702.0 550.7 L707.0 550.5 L712.0 550.2 L717.0 549.6 L722.0 548.9 L727.0 547.9 L732.0 546.9 L737.0 545.9 L742.0 544.8 L747.0 543.6 L752.0 542.4 L757.0 541.1 L762.0 539.7 L767.0 538.3 L772.0 536.8 L777.0 535.2 L782.0 533.6 L787.0 532.0 L792.0 530.3 L797.0 528.6 L802.0 527.0 L807.0 525.5 L812.0 524.0 L817.0 522.7 L822.0 521.5 L827.0 520.4 L832.0 519.4 L837.0 518.4 L842.0 517.5 L847.0 516.7 L852.0 515.9 L857.0 515.2 L862.0 514.6 L867.0 514.1 L872.0 513.7 L877.0 513.5 L882.0 513.3 L887.0 513.1 L892.0 513.0 L897.0 512.9 L902.0 512.8 L907.0 512.8 L907.0 513.8 L902.0 514.0 L897.0 514.3 L892.0 514.6 L887.0 514.9 L882.0 515.3 L877.0 515.6 L872.0 516.1 L867.0 516.6 L862.0 517.2 L857.0 518.0 L852.0 518.8 L847.0 519.7 L842.0 520.6 L837.0 521.5 L832.0 522.5 L827.0 523.5 L822.0 524.6 L817.0 525.8 L812.0 527.0 L807.0 528.5 L802.0 530.0 L797.0 531.6 L792.0 533.3 L787.0 535.0 L782.0 536.6 L777.0 538.1 L772.0 539.7 L767.0 541.2 L762.0 542.7 L757.0 544.1 L752.0 545.4 L747.0 546.7 L742.0 547.9 L737.0 549.0 L732.0 550.2 L727.0 551.2 L722.0 552.2 L717.0 553.0 L712.0 553.6 L707.0 553.9 L702.0 554.0 L697.0 553.8 L692.0 553.5 L687.0 553.0 L682.0 552.5 L677.0 551.9 L672.0 551.3 L667.0 550.6 L662.0 549.8 L657.0 549.0 L652.0 548.1 L647.0 547.2 L642.0 546.2 L637.0 545.1 L632.0 543.9 L627.0 542.7 L622.0 541.4 L617.0 540.0 L612.0 538.6 L607.0 537.1 L602.0 535.6 L597.0 534.0 L592.0 532.2 L587.0 530.1 L582.0 527.8 L577.0 525.5 L572.0 523.1 L567.0 520.6 L562.0 517.9 L557.0 514.8 L552.0 511.2 L547.0 507.2 L542.0 503.1 L537.0 498.6 Z" fill="url(#bg5)"/>
<path d="M537.0 497.8 L542.0 502.3 L547.0 506.4 L552.0 510.4 L557.0 514.0 L562.0 517.1 L567.0 519.8 L572.0 522.3 L577.0 524.7 L582.0 527.0 L587.0 529.3 L592.0 531.4 L597.0 533.2 L602.0 534.8 L607.0 536.3 L612.0 537.8 L617.0 539.2 L622.0 540.6 L627.0 541.9 L632.0 543.1 L637.0 544.3 L642.0 545.4 L647.0 546.4 L652.0 547.3 L657.0 548.2 L662.0 549.0 L667.0 549.8 L672.0 550.5 L677.0 551.1 L682.0 551.7 L687.0 552.2 L692.0 552.7 L697.0 553.0 L702.0 553.2 L707.0 553.1 L712.0 552.8 L717.0 552.2 L722.0 551.4 L727.0 550.4 L732.0 549.4 L737.0 548.2 L742.0 547.1 L747.0 545.9 L752.0 544.6 L757.0 543.3 L762.0 541.9 L767.0 540.4 L772.0 538.9 L777.0 537.3 L782.0 535.8 L787.0 534.2 L792.0 532.5 L797.0 530.8 L802.0 529.2 L807.0 527.7 L812.0 526.2 L817.0 525.0 L822.0 523.8 L827.0 522.7 L832.0 521.7 L837.0 520.7 L842.0 519.8 L847.0 518.9 L852.0 518.0 L857.0 517.2 L862.0 516.4 L867.0 515.8 L872.0 515.3 L877.0 514.8 L882.0 514.5 L887.0 514.1 L892.0 513.8 L897.0 513.5 L902.0 513.2 L907.0 513.0 L907.0 513.9 L902.0 514.3 L897.0 514.8 L892.0 515.4 L887.0 515.9 L882.0 516.4 L877.0 517.0 L872.0 517.6 L867.0 518.3 L862.0 519.1 L857.0 520.0 L852.0 520.9 L847.0 521.8 L842.0 522.8 L837.0 523.8 L832.0 524.8 L827.0 525.8 L822.0 526.9 L817.0 528.0 L812.0 529.3 L807.0 530.6 L802.0 532.2 L797.0 533.8 L792.0 535.5 L787.0 537.1 L782.0 538.7 L777.0 540.3 L772.0 541.8 L767.0 543.3 L762.0 544.8 L757.0 546.2 L752.0 547.6 L747.0 548.9 L742.0 550.2 L737.0 551.4 L732.0 552.6 L727.0 553.8 L722.0 554.8 L717.0 555.6 L712.0 556.2 L707.0 556.5 L702.0 556.5 L697.0 556.3 L692.0 555.8 L687.0 555.2 L682.0 554.6 L677.0 554.0 L672.0 553.3 L667.0 552.6 L662.0 551.8 L657.0 551.0 L652.0 550.1 L647.0 549.1 L642.0 548.1 L637.0 546.9 L632.0 545.7 L627.0 544.5 L622.0 543.2 L617.0 541.8 L612.0 540.4 L607.0 538.9 L602.0 537.4 L597.0 535.8 L592.0 534.0 L587.0 531.9 L582.0 529.6 L577.0 527.3 L572.0 525.0 L567.0 522.5 L562.0 519.8 L557.0 516.7 L552.0 512.9 L547.0 508.7 L542.0 504.4 L537.0 499.6 Z" fill="url(#bg6)"/>
<path d="M537.0 498.8 L542.0 503.6 L547.0 507.9 L552.0 512.1 L557.0 515.9 L562.0 519.0 L567.0 521.7 L572.0 524.2 L577.0 526.5 L582.0 528.8 L587.0 531.1 L592.0 533.2 L597.0 535.0 L602.0 536.6 L607.0 538.1 L612.0 539.6 L617.0 541.0 L622.0 542.4 L627.0 543.7 L632.0 544.9 L637.0 546.1 L642.0 547.3 L647.0 548.3 L652.0 549.3 L657.0 550.2 L662.0 551.0 L667.0 551.8 L672.0 552.5 L677.0 553.2 L682.0 553.8 L687.0 554.4 L692.0 555.0 L697.0 555.5 L702.0 555.7 L707.0 555.7 L712.0 555.4 L717.0 554.8 L722.0 554.0 L727.0 553.0 L732.0 551.8 L737.0 550.6 L742.0 549.4 L747.0 548.1 L752.0 546.8 L757.0 545.4 L762.0 544.0 L767.0 542.5 L772.0 541.0 L777.0 539.5 L782.0 537.9 L787.0 536.3 L792.0 534.7 L797.0 533.0 L802.0 531.4 L807.0 529.8 L812.0 528.5 L817.0 527.2 L822.0 526.1 L827.0 525.0 L832.0 524.0 L837.0 523.0 L842.0 522.0 L847.0 521.0 L852.0 520.1 L857.0 519.2 L862.0 518.3 L867.0 517.5 L872.0 516.8 L877.0 516.2 L882.0 515.6 L887.0 515.1 L892.0 514.6 L897.0 514.0 L902.0 513.5 L907.0 513.1 L907.0 514.0 L902.0 514.7 L897.0 515.4 L892.0 516.1 L887.0 516.9 L882.0 517.6 L877.0 518.3 L872.0 519.2 L867.0 520.0 L862.0 521.0 L857.0 522.0 L852.0 523.0 L847.0 524.0 L842.0 525.1 L837.0 526.1 L832.0 527.1 L827.0 528.1 L822.0 529.2 L817.0 530.3 L812.0 531.5 L807.0 532.8 L802.0 534.3 L797.0 536.0 L792.0 537.7 L787.0 539.3 L782.0 540.9 L777.0 542.4 L772.0 543.9 L767.0 545.4 L762.0 546.9 L757.0 548.3 L752.0 549.8 L747.0 551.2 L742.0 552.5 L737.0 553.8 L732.0 555.0 L727.0 556.3 L722.0 557.4 L717.0 558.3 L712.0 558.9 L707.0 559.1 L702.0 559.0 L697.0 558.7 L692.0 558.1 L687.0 557.5 L682.0 556.8 L677.0 556.1 L672.0 555.4 L667.0 554.6 L662.0 553.8 L657.0 552.9 L652.0 552.0 L647.0 551.0 L642.0 549.9 L637.0 548.8 L632.0 547.6 L627.0 546.3 L622.0 545.0 L617.0 543.6 L612.0 542.1 L607.0 540.7 L602.0 539.1 L597.0 537.5 L592.0 535.7 L587.0 533.7 L582.0 531.4 L577.0 529.1 L572.0 526.9 L567.0 524.4 L562.0 521.7 L557.0 518.5 L552.0 514.6 L547.0 510.3 L542.0 505.7 L537.0 500.6 Z" fill="url(#bg7)"/>
<path d="M537.0 499.8 L542.0 504.9 L547.0 509.5 L552.0 513.8 L557.0 517.7 L562.0 520.9 L567.0 523.6 L572.0 526.1 L577.0 528.3 L582.0 530.6 L587.0 532.9 L592.0 534.9 L597.0 536.7 L602.0 538.3 L607.0 539.9 L612.0 541.3 L617.0 542.8 L622.0 544.2 L627.0 545.5 L632.0 546.8 L637.0 548.0 L642.0 549.1 L647.0 550.2 L652.0 551.2 L657.0 552.1 L662.0 553.0 L667.0 553.8 L672.0 554.6 L677.0 555.3 L682.0 556.0 L687.0 556.7 L692.0 557.3 L697.0 557.9 L702.0 558.2 L707.0 558.3 L712.0 558.1 L717.0 557.5 L722.0 556.6 L727.0 555.5 L732.0 554.2 L737.0 553.0 L742.0 551.7 L747.0 550.4 L752.0 549.0 L757.0 547.5 L762.0 546.1 L767.0 544.6 L772.0 543.1 L777.0 541.6 L782.0 540.1 L787.0 538.5 L792.0 536.9 L797.0 535.2 L802.0 533.5 L807.0 532.0 L812.0 530.7 L817.0 529.5 L822.0 528.4 L827.0 527.3 L832.0 526.3 L837.0 525.3 L842.0 524.3 L847.0 523.2 L852.0 522.2 L857.0 521.2 L862.0 520.2 L867.0 519.2 L872.0 518.4 L877.0 517.5 L882.0 516.8 L887.0 516.1 L892.0 515.3 L897.0 514.6 L902.0 513.9 L907.0 513.2 L907.0 514.1 L902.0 515.1 L897.0 516.0 L892.0 516.9 L887.0 517.8 L882.0 518.8 L877.0 519.7 L872.0 520.7 L867.0 521.7 L862.0 522.8 L857.0 524.0 L852.0 525.1 L847.0 526.2 L842.0 527.3 L837.0 528.4 L832.0 529.4 L827.0 530.4 L822.0 531.5 L817.0 532.5 L812.0 533.7 L807.0 535.0 L802.0 536.5 L797.0 538.2 L792.0 539.8 L787.0 541.5 L782.0 543.0 L777.0 544.5 L772.0 546.0 L767.0 547.5 L762.0 549.0 L757.0 550.5 L752.0 552.0 L747.0 553.4 L742.0 554.8 L737.0 556.1 L732.0 557.5 L727.0 558.8 L722.0 560.0 L717.0 560.9 L712.0 561.5 L707.0 561.7 L702.0 561.6 L697.0 561.1 L692.0 560.5 L687.0 559.7 L682.0 558.9 L677.0 558.2 L672.0 557.4 L667.0 556.6 L662.0 555.7 L657.0 554.8 L652.0 553.9 L647.0 552.9 L642.0 551.8 L637.0 550.7 L632.0 549.4 L627.0 548.1 L622.0 546.8 L617.0 545.4 L612.0 543.9 L607.0 542.4 L602.0 540.9 L597.0 539.3 L592.0 537.5 L587.0 535.5 L582.0 533.2 L577.0 531.0 L572.0 528.7 L567.0 526.3 L562.0 523.6 L557.0 520.3 L552.0 516.3 L547.0 511.8 L542.0 507.0 L537.0 501.6 Z" fill="url(#bg8)"/>
<path d="M537.0 500.8 L542.0 506.2 L547.0 511.0 L552.0 515.5 L557.0 519.5 L562.0 522.8 L567.0 525.5 L572.0 527.9 L577.0 530.2 L582.0 532.4 L587.0 534.7 L592.0 536.7 L597.0 538.5 L602.0 540.1 L607.0 541.6 L612.0 543.1 L617.0 544.6 L622.0 546.0 L627.0 547.3 L632.0 548.6 L637.0 549.9 L642.0 551.0 L647.0 552.1 L652.0 553.1 L657.0 554.0 L662.0 554.9 L667.0 555.8 L672.0 556.6 L677.0 557.4 L682.0 558.1 L687.0 558.9 L692.0 559.7 L697.0 560.3 L702.0 560.8 L707.0 560.9 L712.0 560.7 L717.0 560.1 L722.0 559.2 L727.0 558.0 L732.0 556.7 L737.0 555.3 L742.0 554.0 L747.0 552.6 L752.0 551.2 L757.0 549.7 L762.0 548.2 L767.0 546.7 L772.0 545.2 L777.0 543.7 L782.0 542.2 L787.0 540.7 L792.0 539.0 L797.0 537.4 L802.0 535.7 L807.0 534.2 L812.0 532.9 L817.0 531.7 L822.0 530.7 L827.0 529.6 L832.0 528.6 L837.0 527.6 L842.0 526.5 L847.0 525.4 L852.0 524.3 L857.0 523.2 L862.0 522.0 L867.0 520.9 L872.0 519.9 L877.0 518.9 L882.0 518.0 L887.0 517.0 L892.0 516.1 L897.0 515.2 L902.0 514.3 L907.0 513.3 L907.0 514.2 L902.0 515.4 L897.0 516.6 L892.0 517.7 L887.0 518.8 L882.0 519.9 L877.0 521.1 L872.0 522.2 L867.0 523.5 L862.0 524.7 L857.0 526.0 L852.0 527.2 L847.0 528.4 L842.0 529.6 L837.0 530.7 L832.0 531.7 L827.0 532.7 L822.0 533.7 L817.0 534.8 L812.0 535.9 L807.0 537.2 L802.0 538.7 L797.0 540.4 L792.0 542.0 L787.0 543.7 L782.0 545.2 L777.0 546.7 L772.0 548.1 L767.0 549.6 L762.0 551.1 L757.0 552.6 L752.0 554.1 L747.0 555.6 L742.0 557.1 L737.0 558.5 L732.0 559.9 L727.0 561.3 L722.0 562.5 L717.0 563.5 L712.0 564.1 L707.0 564.3 L702.0 564.1 L697.0 563.6 L692.0 562.8 L687.0 562.0 L682.0 561.1 L677.0 560.3 L672.0 559.4 L667.0 558.6 L662.0 557.7 L657.0 556.8 L652.0 555.8 L647.0 554.8 L642.0 553.7 L637.0 552.5 L632.0 551.3 L627.0 549.9 L622.0 548.6 L617.0 547.1 L612.0 545.7 L607.0 544.2 L602.0 542.6 L597.0 541.0 L592.0 539.3 L587.0 537.2 L582.0 535.0 L577.0 532.8 L572.0 530.6 L567.0 528.2 L562.0 525.5 L557.0 522.2 L552.0 518.1 L547.0 513.4 L542.0 508.3 L537.0 502.7 Z" fill="url(#bg9)"/>
<path d="M537.0 501.9 L542.0 507.5 L547.0 512.6 L552.0 517.3 L557.0 521.4 L562.0 524.7 L567.0 527.4 L572.0 529.8 L577.0 532.0 L582.0 534.2 L587.0 536.4 L592.0 538.5 L597.0 540.2 L602.0 541.8 L607.0 543.4 L612.0 544.9 L617.0 546.3 L622.0 547.8 L627.0 549.1 L632.0 550.5 L637.0 551.7 L642.0 552.9 L647.0 554.0 L652.0 555.0 L657.0 556.0 L662.0 556.9 L667.0 557.8 L672.0 558.6 L677.0 559.5 L682.0 560.3 L687.0 561.2 L692.0 562.0 L697.0 562.8 L702.0 563.3 L707.0 563.5 L712.0 563.3 L717.0 562.7 L722.0 561.7 L727.0 560.5 L732.0 559.1 L737.0 557.7 L742.0 556.3 L747.0 554.8 L752.0 553.3 L757.0 551.8 L762.0 550.3 L767.0 548.8 L772.0 547.3 L777.0 545.9 L782.0 544.4 L787.0 542.9 L792.0 541.2 L797.0 539.6 L802.0 537.9 L807.0 536.4 L812.0 535.1 L817.0 534.0 L822.0 532.9 L827.0 531.9 L832.0 530.9 L837.0 529.9 L842.0 528.8 L847.0 527.6 L852.0 526.4 L857.0 525.2 L862.0 523.9 L867.0 522.7 L872.0 521.4 L877.0 520.3 L882.0 519.1 L887.0 518.0 L892.0 516.9 L897.0 515.8 L902.0 514.6 L907.0 513.5 L907.0 514.4 L902.0 515.8 L897.0 517.2 L892.0 518.5 L887.0 519.8 L882.0 521.1 L877.0 522.4 L872.0 523.8 L867.0 525.2 L862.0 526.6 L857.0 528.0 L852.0 529.3 L847.0 530.6 L842.0 531.8 L837.0 533.0 L832.0 534.1 L827.0 535.1 L822.0 536.0 L817.0 537.0 L812.0 538.1 L807.0 539.4 L802.0 540.9 L797.0 542.6 L792.0 544.2 L787.0 545.8 L782.0 547.4 L777.0 548.8 L772.0 550.2 L767.0 551.7 L762.0 553.2 L757.0 554.8 L752.0 556.3 L747.0 557.9 L742.0 559.4 L737.0 560.8 L732.0 562.3 L727.0 563.8 L722.0 565.1 L717.0 566.1 L712.0 566.7 L707.0 566.9 L702.0 566.6 L697.0 566.0 L692.0 565.2 L687.0 564.2 L682.0 563.2 L677.0 562.3 L672.0 561.5 L667.0 560.6 L662.0 559.7 L657.0 558.7 L652.0 557.7 L647.0 556.7 L642.0 555.6 L637.0 554.4 L632.0 553.1 L627.0 551.8 L622.0 550.4 L617.0 548.9 L612.0 547.5 L607.0 545.9 L602.0 544.4 L597.0 542.8 L592.0 541.0 L587.0 539.0 L582.0 536.8 L577.0 534.6 L572.0 532.4 L567.0 530.1 L562.0 527.4 L557.0 524.0 L552.0 519.8 L547.0 514.9 L542.0 509.6 L537.0 503.7 Z" fill="url(#bg10)"/>
<path d="M537.0 502.9 L542.0 508.8 L547.0 514.1 L552.0 519.0 L557.0 523.2 L562.0 526.6 L567.0 529.3 L572.0 531.6 L577.0 533.8 L582.0 536.0 L587.0 538.2 L592.0 540.2 L597.0 542.0 L602.0 543.6 L607.0 545.1 L612.0 546.7 L617.0 548.1 L622.0 549.6 L627.0 551.0 L632.0 552.3 L637.0 553.6 L642.0 554.8 L647.0 555.9 L652.0 556.9 L657.0 557.9 L662.0 558.9 L667.0 559.8 L672.0 560.7 L677.0 561.5 L682.0 562.4 L687.0 563.4 L692.0 564.4 L697.0 565.2 L702.0 565.8 L707.0 566.1 L712.0 565.9 L717.0 565.3 L722.0 564.3 L727.0 563.0 L732.0 561.5 L737.0 560.0 L742.0 558.6 L747.0 557.1 L752.0 555.5 L757.0 554.0 L762.0 552.4 L767.0 550.9 L772.0 549.4 L777.0 548.0 L782.0 546.6 L787.0 545.0 L792.0 543.4 L797.0 541.8 L802.0 540.1 L807.0 538.6 L812.0 537.3 L817.0 536.2 L822.0 535.2 L827.0 534.3 L832.0 533.3 L837.0 532.2 L842.0 531.0 L847.0 529.8 L852.0 528.5 L857.0 527.2 L862.0 525.8 L867.0 524.4 L872.0 523.0 L877.0 521.6 L882.0 520.3 L887.0 519.0 L892.0 517.7 L897.0 516.4 L902.0 515.0 L907.0 513.6 L907.0 514.5 L902.0 516.1 L897.0 517.8 L892.0 519.3 L887.0 520.8 L882.0 522.3 L877.0 523.8 L872.0 525.3 L867.0 526.9 L862.0 528.4 L857.0 529.9 L852.0 531.4 L847.0 532.8 L842.0 534.1 L837.0 535.3 L832.0 536.4 L827.0 537.4 L822.0 538.3 L817.0 539.3 L812.0 540.4 L807.0 541.6 L802.0 543.1 L797.0 544.7 L792.0 546.4 L787.0 548.0 L782.0 549.5 L777.0 550.9 L772.0 552.3 L767.0 553.8 L762.0 555.3 L757.0 556.9 L752.0 558.5 L747.0 560.1 L742.0 561.7 L737.0 563.2 L732.0 564.8 L727.0 566.3 L722.0 567.7 L717.0 568.7 L712.0 569.3 L707.0 569.5 L702.0 569.2 L697.0 568.5 L692.0 567.5 L687.0 566.4 L682.0 565.4 L677.0 564.4 L672.0 563.5 L667.0 562.6 L662.0 561.6 L657.0 560.7 L652.0 559.7 L647.0 558.6 L642.0 557.5 L637.0 556.3 L632.0 554.9 L627.0 553.6 L622.0 552.2 L617.0 550.7 L612.0 549.2 L607.0 547.7 L602.0 546.1 L597.0 544.5 L592.0 542.8 L587.0 540.8 L582.0 538.6 L577.0 536.5 L572.0 534.3 L567.0 532.0 L562.0 529.3 L557.0 525.8 L552.0 521.5 L547.0 516.4 L542.0 511.0 L537.0 504.7 Z" fill="url(#bg11)"/>
<path d="M537.0 503.9 L542.0 510.2 L547.0 515.6 L552.0 520.7 L557.0 525.0 L562.0 528.5 L567.0 531.2 L572.0 533.5 L577.0 535.7 L582.0 537.8 L587.0 540.0 L592.0 542.0 L597.0 543.7 L602.0 545.3 L607.0 546.9 L612.0 548.4 L617.0 549.9 L622.0 551.4 L627.0 552.8 L632.0 554.1 L637.0 555.5 L642.0 556.7 L647.0 557.8 L652.0 558.9 L657.0 559.9 L662.0 560.8 L667.0 561.8 L672.0 562.7 L677.0 563.6 L682.0 564.6 L687.0 565.6 L692.0 566.7 L697.0 567.7 L702.0 568.4 L707.0 568.7 L712.0 568.5 L717.0 567.9 L722.0 566.9 L727.0 565.5 L732.0 564.0 L737.0 562.4 L742.0 560.9 L747.0 559.3 L752.0 557.7 L757.0 556.1 L762.0 554.5 L767.0 553.0 L772.0 551.5 L777.0 550.1 L782.0 548.7 L787.0 547.2 L792.0 545.6 L797.0 543.9 L802.0 542.3 L807.0 540.8 L812.0 539.6 L817.0 538.5 L822.0 537.5 L827.0 536.6 L832.0 535.6 L837.0 534.5 L842.0 533.3 L847.0 532.0 L852.0 530.6 L857.0 529.1 L862.0 527.6 L867.0 526.1 L872.0 524.5 L877.0 523.0 L882.0 521.5 L887.0 520.0 L892.0 518.5 L897.0 517.0 L902.0 515.3 L907.0 513.7 L907.0 514.6 L902.0 516.5 L897.0 518.4 L892.0 520.1 L887.0 521.7 L882.0 523.4 L877.0 525.1 L872.0 526.8 L867.0 528.6 L862.0 530.3 L857.0 531.9 L852.0 533.5 L847.0 535.0 L842.0 536.3 L837.0 537.6 L832.0 538.7 L827.0 539.7 L822.0 540.6 L817.0 541.5 L812.0 542.6 L807.0 543.8 L802.0 545.3 L797.0 546.9 L792.0 548.6 L787.0 550.2 L782.0 551.7 L777.0 553.0 L772.0 554.4 L767.0 555.9 L762.0 557.4 L757.0 559.1 L752.0 560.7 L747.0 562.4 L742.0 564.0 L737.0 565.6 L732.0 567.2 L727.0 568.8 L722.0 570.3 L717.0 571.3 L712.0 572.0 L707.0 572.1 L702.0 571.7 L697.0 570.9 L692.0 569.8 L687.0 568.7 L682.0 567.5 L677.0 566.5 L672.0 565.5 L667.0 564.6 L662.0 563.6 L657.0 562.6 L652.0 561.6 L647.0 560.5 L642.0 559.4 L637.0 558.1 L632.0 556.8 L627.0 555.4 L622.0 554.0 L617.0 552.5 L612.0 551.0 L607.0 549.5 L602.0 547.9 L597.0 546.3 L592.0 544.5 L587.0 542.6 L582.0 540.4 L577.0 538.3 L572.0 536.1 L567.0 533.9 L562.0 531.2 L557.0 527.7 L552.0 523.2 L547.0 518.0 L542.0 512.3 L537.0 505.7 Z" fill="url(#bg12)"/>
<path d="M537.0 504.9 L542.0 511.5 L547.0 517.2 L552.0 522.4 L557.0 526.9 L562.0 530.4 L567.0 533.1 L572.0 535.3 L577.0 537.5 L582.0 539.6 L587.0 541.8 L592.0 543.7 L597.0 545.5 L602.0 547.1 L607.0 548.7 L612.0 550.2 L617.0 551.7 L622.0 553.2 L627.0 554.6 L632.0 556.0 L637.0 557.3 L642.0 558.6 L647.0 559.7 L652.0 560.8 L657.0 561.8 L662.0 562.8 L667.0 563.8 L672.0 564.7 L677.0 565.7 L682.0 566.7 L687.0 567.9 L692.0 569.0 L697.0 570.1 L702.0 570.9 L707.0 571.3 L712.0 571.2 L717.0 570.5 L722.0 569.5 L727.0 568.0 L732.0 566.4 L737.0 564.8 L742.0 563.2 L747.0 561.6 L752.0 559.9 L757.0 558.3 L762.0 556.6 L767.0 555.1 L772.0 553.6 L777.0 552.2 L782.0 550.9 L787.0 549.4 L792.0 547.8 L797.0 546.1 L802.0 544.5 L807.0 543.0 L812.0 541.8 L817.0 540.7 L822.0 539.8 L827.0 538.9 L832.0 537.9 L837.0 536.8 L842.0 535.5 L847.0 534.2 L852.0 532.7 L857.0 531.1 L862.0 529.5 L867.0 527.8 L872.0 526.0 L877.0 524.3 L882.0 522.6 L887.0 520.9 L892.0 519.3 L897.0 517.6 L902.0 515.7 L907.0 513.8 L907.0 514.8 L902.0 516.9 L897.0 519.0 L892.0 520.9 L887.0 522.7 L882.0 524.6 L877.0 526.5 L872.0 528.4 L867.0 530.3 L862.0 532.2 L857.0 533.9 L852.0 535.6 L847.0 537.1 L842.0 538.6 L837.0 539.9 L832.0 541.0 L827.0 542.0 L822.0 542.9 L817.0 543.8 L812.0 544.8 L807.0 546.0 L802.0 547.4 L797.0 549.1 L792.0 550.8 L787.0 552.4 L782.0 553.8 L777.0 555.2 L772.0 556.6 L767.0 558.0 L762.0 559.5 L757.0 561.2 L752.0 562.9 L747.0 564.6 L742.0 566.3 L737.0 567.9 L732.0 569.6 L727.0 571.3 L722.0 572.8 L717.0 574.0 L712.0 574.6 L707.0 574.7 L702.0 574.2 L697.0 573.3 L692.0 572.2 L687.0 570.9 L682.0 569.7 L677.0 568.6 L672.0 567.6 L667.0 566.6 L662.0 565.6 L657.0 564.5 L652.0 563.5 L647.0 562.4 L642.0 561.2 L637.0 560.0 L632.0 558.6 L627.0 557.2 L622.0 555.8 L617.0 554.3 L612.0 552.8 L607.0 551.2 L602.0 549.6 L597.0 548.0 L592.0 546.3 L587.0 544.4 L582.0 542.2 L577.0 540.1 L572.0 538.0 L567.0 535.7 L562.0 533.0 L557.0 529.5 L552.0 524.9 L547.0 519.5 L542.0 513.6 L537.0 506.7 Z" fill="url(#bg13)"/>
</g>
<!-- right dark face -->
<path d="M995 478 L907.1 512.5 C901 519 898 526 896.4 530.7 L890 550 L823.5 779.3 L830 790 L1000 740 Z" fill="#004c00"/>
</g>
<use href="#sil" fill="none" stroke="#0a1a0a" stroke-width="1.1"/>
<path d="M988.6 480.8 L907.1 512.5 C901 519 898 526 896.4 530.7 L890 550 L823.5 779.3" fill="none" stroke="#001000" stroke-width="2"/>
<!-- selection brackets -->
<g fill="none" stroke="#00ff00" stroke-width="2.4" stroke-linecap="butt">
<path d="M569.3 412.1 L546.8 422.1 L610.6 442.5 M546.8 422.1 L533.5 472.1"/>
<path d="M642.1 382.5 L665.7 372.4 L729.6 393.6 M665.7 372.4 L652.2 423.2"/>
<path d="M805.4 506.7 L869.6 528.6 L892.6 518.9 M869.6 528.6 L856.4 579.4" stroke="#00f400"/>
<path d="M924.3 457.9 L988.6 480.8 L965 490"/>
<path d="M492.6 629.3 L478.9 680.3 L543.6 702.1"/>
<path d="M738.2 766 L802.5 787.9 L823.5 779.3 M802.5 787.9 L815.4 736.9"/>
</g>
<rect x="729.5" y="575.5" width="10" height="10" fill="#00ff00" stroke="#002000" stroke-width="1"/>
<!-- axis gizmo -->
<g>
<path d="M44 879.4 C46 870 50 863 54.9 859.4 C60 853 67 848.5 74.3 846.3 C80 844.5 86 843.8 91.4 844 C97 844.3 102 845 105.7 846.3 L101.7 866.3 C96 869 92 874 89 878.9 C86 883 84 888 82.9 892.6 L53.7 884 Z" fill="#00e000" stroke="#00a000" stroke-width="0.6"/>
<path d="M53.7 884 L82.9 892.6 L81.1 900 L86.9 902.9 L77.7 907.4 L68.6 904.6 C60 901 54 897 51.4 893.7 Z" fill="#6868ff"/>
<path d="M98.3 867.4 L104.6 869.1 C103.5 876 102 883 100.6 889.1 L97.7 898.3 L86.9 901.7 L81.1 900 L82.9 892.6 C84 888 86 883 89 878.9 C92 874 95 870 98.3 867.4 Z" fill="#ff6868"/>
<path d="M86.9 901.7 L97.7 898.3 L95 901 L89 903 Z" fill="#808080"/>
<path d="M28 875.2 L53.7 884" stroke="#ff0000" stroke-width="1"/>
<path d="M108.6 830.3 C105 842 101 856 98.3 867.4" stroke="#0000ff" stroke-width="1" fill="none"/>
<path d="M68.6 905.1 L80 900.3" stroke="#008000" stroke-width="1"/>
<path d="M88 901 C90 890 97 875 104 869.5 M93.5 899.5 C95 890 99 878 104.5 872" stroke="#ff0000" stroke-width="0.9" fill="none"/>
<path d="M100.6 889.1 L97.7 898.3 L86.9 901.7" stroke="#ff0000" stroke-width="0.9" fill="none" stroke-dasharray="2 1"/>
<path d="M53.7 884 L51.4 893.7 C54 897 60 901 68.6 904.6 M56 889 C62 894 70 898 80 900.3 M77.7 907.4 V901 M68.6 904.6 L77.7 907.4 L86.9 902.9" stroke="#0000ff" stroke-width="0.9" fill="none"/>
<path d="M53.7 884 L82.9 892.6" stroke="#00a000" stroke-width="1" stroke-dasharray="2 1"/>
</g>
<g font-family="Liberation Sans, sans-serif" font-size="13" fill="#000"><text x="10.5" y="876.5">x</text><text x="107.5" y="822">z</text><text x="59.5" y="912">y</text></g>
</svg>
</div>
<div id="rpanel">
<style>#rpanel .t{position:absolute;white-space:nowrap;font-size:12px;line-height:14px;color:#000;letter-spacing:-0.33px;word-spacing:1px}#rpanel .s{position:absolute;white-space:nowrap;font-size:10.8px;line-height:13px;color:#000;letter-spacing:-0.15px}#rpanel .inp{position:absolute;background:#fff;border:1px solid #e3e9ef;border-top-color:#abadb3;border-left-color:#e2e3ea;font-size:10.8px;letter-spacing:-0.15px;line-height:19px;text-align:right;padding-right:5px;box-shadow:0 0 0 1px rgba(255,255,255,.6)}#rpanel .grp{position:absolute;border:1px solid #d5dfe5;border-radius:3px;box-shadow:inset 1px 1px 0 #fff,1px 1px 0 #fff}#rpanel .grp b{position:absolute;left:6px;top:-8px;background:#f0f0f0;padding:0 2px;font-weight:normal;font-size:10.8px;letter-spacing:-0.15px;line-height:13px}</style>
<div class="abs" style="left:0;top:0;width:5px;height:910px;background:#f0f0f0;border-left:1px solid #fcfcfc"></div>
<div class="abs" style="left:5px;top:0;width:1px;height:910px;background:#fdfdfd"></div>
<div class="abs" style="left:2px;top:440px;width:2px;height:30px;background:repeating-linear-gradient(180deg,#fafafa 0 1px,#8c8c8c 1px 2.5px,transparent 2.5px 4px)"></div>
<div class="abs" style="left:6px;top:0;width:22px;height:910px;background:#f0f0f0"></div>
<div class="abs" style="left:9px;top:9px;width:14px;height:70px;"><div style="position:absolute;left:14px;top:0;transform-origin:0 0;transform:rotate(90deg);white-space:nowrap;font-size:11px;line-height:14px;color:#000">Context area</div></div>
<div class="abs" style="left:28px;top:0px;width:324px;height:528px;background:#fff;border:2px solid #a0a0a4;border-right:1px solid #a0a0a4;border-bottom:1px solid #a0a0a4;overflow:hidden">
<svg class="abs" style="left:0;top:0" width="321" height="526" viewBox="1355 79 321 526">
<defs><radialGradient id="tsW" cx="0.4" cy="0.35" r="0.7"><stop offset="0" stop-color="#fff"/><stop offset="0.6" stop-color="#dcdcdc"/><stop offset="1" stop-color="#909090"/></radialGradient><radialGradient id="tsF" cx="0.4" cy="0.35" r="0.7"><stop offset="0" stop-color="#f4f4f4"/><stop offset="0.55" stop-color="#c0c0c0"/><stop offset="1" stop-color="#787878"/></radialGradient><radialGradient id="tsG" cx="0.4" cy="0.35" r="0.7"><stop offset="0" stop-color="#e4e4e4"/><stop offset="0.6" stop-color="#b0b0b0"/><stop offset="1" stop-color="#686868"/></radialGradient><radialGradient id="tsD" cx="0.4" cy="0.35" r="0.7"><stop offset="0" stop-color="#8a8a8a"/><stop offset="0.6" stop-color="#555"/><stop offset="1" stop-color="#2a2a2a"/></radialGradient><g id="fold"><path d="M0.5 0.5 H6 L7 1.5 H13.5 V11.5 H0.5 Z" fill="#ecdc00" stroke="#a89800" stroke-width="0.8"/><circle cx="7.3" cy="4.3" r="3.3" fill="url(#tsF)"/><path d="M1.6 7.2 H15 L13.6 11.8 H0.4 Z" fill="#ccbc1c" stroke="#6c6000" stroke-width="0.8"/></g><g id="eyeG"><path d="M0.3 4.9 C2.8 -0.5 9.8 -0.5 12.3 4.9 C9.8 10.3 2.8 10.3 0.3 4.9 Z" fill="#dedede" stroke="#888888" stroke-width="1.5" stroke-linejoin="round"/><circle cx="6.3" cy="5.1" r="3" fill="#808080"/><circle cx="5.2" cy="4" r="1" fill="#e8e8e8"/></g><g id="eyeO"><path d="M0.3 4.9 C2.8 -0.5 9.8 -0.5 12.3 4.9 C9.8 10.3 2.8 10.3 0.3 4.9 Z" fill="#ffdcb8" stroke="#ee7a10" stroke-width="1.5" stroke-linejoin="round"/><circle cx="6.3" cy="5.1" r="3" fill="#ee7410"/><circle cx="5.2" cy="4" r="1" fill="#fff"/></g><clipPath id="lh"><rect x="-1" y="-2" width="7.3" height="14"/></clipPath><clipPath id="rh"><rect x="6.3" y="-2" width="8" height="14"/></clipPath><g id="eyeH"><g clip-path="url(#lh)"><use href="#eyeO"/></g><g clip-path="url(#rh)"><use href="#eyeG"/></g></g><g id="redx"><circle cx="0.4" cy="0" r="5.6" fill="none" stroke="#787880" stroke-width="1.7"/><path d="M-1.9 -2.2 L2.7 2.2 M2.7 -2.2 L-1.9 2.2" stroke="#ff3c0c" stroke-width="1.6"/></g><g id="ofold"><path d="M0.5 2 H5 L6 3 H11 V5 H13.5 L11 11 H0.5 Z" fill="#f09020" stroke="#b06000" stroke-width="0.7"/><path d="M0.8 10.8 L3.2 5.3 H14 L11.2 10.8 Z" fill="#f8b040" stroke="#b06000" stroke-width="0.7"/><path d="M8 1.5 C10.5 0.2 13 1 13.6 3.2 L14.8 2.8 L13.4 5.6 L11 4 L12.3 3.6 C11.8 2.3 10 1.8 8.4 2.5 Z" fill="#505050"/></g></defs>
<rect x="1356" y="242.8" width="320" height="17.5" fill="#ebebeb"/>
<path d="M1365.5 95 V342.0 H1377" fill="none" stroke="#9c9c9c" stroke-width="1" stroke-dasharray="1 1.25"/>
<path d="M1370 89.5 H1377" fill="none" stroke="#9c9c9c" stroke-width="1" stroke-dasharray="1 1.25"/>
<path d="M1383.5 99 V324.0" fill="none" stroke="#9c9c9c" stroke-width="1" stroke-dasharray="1 1.25"/>
<path d="M1401.5 241.7 V270.0" fill="none" stroke="#9c9c9c" stroke-width="1" stroke-dasharray="1 1.25"/>
<rect x="1360.5" y="85.5" width="8" height="8" fill="#fff" stroke="#9a9a9a" stroke-width="1"/><path d="M1362.0 89.5 H1367.0" stroke="#000" stroke-width="1"/>
<circle cx="1384.3" cy="85.4" r="4.4" fill="url(#tsD)"/><circle cx="1389.5" cy="90.2" r="4.6" fill="url(#tsG)"/><circle cx="1383.3" cy="93.2" r="4.1" fill="url(#tsW)"/>
<use href="#ofold" x="1657" y="82.7"/>
<path d="M1384 107.7 H1393.5" fill="none" stroke="#9c9c9c" stroke-width="1" stroke-dasharray="1 1.25"/>
<use href="#fold" x="1395.8" y="100.8"/>
<use href="#eyeH" x="1415.8" y="102.5"/>
<path d="M1384 125.7 H1393.5" fill="none" stroke="#9c9c9c" stroke-width="1" stroke-dasharray="1 1.25"/>
<use href="#fold" x="1395.8" y="118.8"/>
<use href="#eyeH" x="1415.8" y="120.5"/>
<path d="M1384 143.7 H1393.5" fill="none" stroke="#9c9c9c" stroke-width="1" stroke-dasharray="1 1.25"/>
<use href="#fold" x="1395.8" y="136.8"/>
<use href="#eyeH" x="1415.8" y="138.5"/>
<path d="M1384 161.7 H1393.5" fill="none" stroke="#9c9c9c" stroke-width="1" stroke-dasharray="1 1.25"/>
<use href="#fold" x="1395.8" y="154.8"/>
<use href="#eyeH" x="1415.8" y="156.5"/>
<path d="M1387 179.7 H1393.5" fill="none" stroke="#9c9c9c" stroke-width="1" stroke-dasharray="1 1.25"/>
<rect x="1378.5" y="175.5" width="8" height="8" fill="#fff" stroke="#9a9a9a" stroke-width="1"/><path d="M1380.0 179.5 H1385.0" stroke="#000" stroke-width="1"/><path d="M1382.5 177.0 V182.0" stroke="#000" stroke-width="1"/>
<use href="#fold" x="1395.8" y="172.8"/>
<use href="#eyeG" x="1415.8" y="174.5"/>
<path d="M1387 197.7 H1393.5" fill="none" stroke="#9c9c9c" stroke-width="1" stroke-dasharray="1 1.25"/>
<rect x="1378.5" y="193.5" width="8" height="8" fill="#fff" stroke="#9a9a9a" stroke-width="1"/><path d="M1380.0 197.5 H1385.0" stroke="#000" stroke-width="1"/><path d="M1382.5 195.0 V200.0" stroke="#000" stroke-width="1"/>
<use href="#fold" x="1395.8" y="190.8"/>
<use href="#eyeG" x="1415.8" y="192.5"/>
<path d="M1384 215.7 H1393.5" fill="none" stroke="#9c9c9c" stroke-width="1" stroke-dasharray="1 1.25"/>
<use href="#fold" x="1395.8" y="208.8"/>
<use href="#eyeH" x="1415.8" y="210.5"/>
<path d="M1387 233.7 H1393.5" fill="none" stroke="#9c9c9c" stroke-width="1" stroke-dasharray="1 1.25"/>
<rect x="1378.5" y="229.5" width="8" height="8" fill="#fff" stroke="#9a9a9a" stroke-width="1"/><path d="M1380.0 233.5 H1385.0" stroke="#000" stroke-width="1"/>
<use href="#fold" x="1395.8" y="226.8"/>
<use href="#eyeH" x="1415.8" y="228.5"/>
<path d="M1402 251.7 H1410" fill="none" stroke="#9c9c9c" stroke-width="1" stroke-dasharray="1 1.25"/>
<circle cx="1422.2" cy="251.7" r="5.5" fill="#2a2a2a"/><circle cx="1421" cy="250.7" r="3" fill="#3c3c3c"/>
<use href="#eyeO" x="1434" y="246.5"/>
<path d="M1402 269.7 H1410" fill="none" stroke="#9c9c9c" stroke-width="1" stroke-dasharray="1 1.25"/>
<circle cx="1422.2" cy="269.7" r="5.5" fill="#2a2a2a"/><circle cx="1421" cy="268.7" r="3" fill="#3c3c3c"/>
<use href="#eyeG" x="1434" y="264.5"/>
<path d="M1384 287.7 H1393.5" fill="none" stroke="#9c9c9c" stroke-width="1" stroke-dasharray="1 1.25"/>
<use href="#fold" x="1395.8" y="280.8"/>
<use href="#eyeH" x="1415.8" y="282.5"/>
<path d="M1387 305.7 H1393.5" fill="none" stroke="#9c9c9c" stroke-width="1" stroke-dasharray="1 1.25"/>
<rect x="1378.5" y="301.5" width="8" height="8" fill="#fff" stroke="#9a9a9a" stroke-width="1"/><path d="M1380.0 305.5 H1385.0" stroke="#000" stroke-width="1"/><path d="M1382.5 303.0 V308.0" stroke="#000" stroke-width="1"/>
<use href="#fold" x="1395.8" y="298.8"/>
<use href="#eyeG" x="1415.8" y="300.5"/>
<path d="M1387 323.7 H1393.5" fill="none" stroke="#9c9c9c" stroke-width="1" stroke-dasharray="1 1.25"/>
<rect x="1378.5" y="319.5" width="8" height="8" fill="#fff" stroke="#9a9a9a" stroke-width="1"/><path d="M1380.0 323.5 H1385.0" stroke="#000" stroke-width="1"/><path d="M1382.5 321.0 V326.0" stroke="#000" stroke-width="1"/>
<use href="#fold" x="1395.8" y="316.8"/>
<use href="#eyeG" x="1415.8" y="318.5"/>
<path d="M1378 336.2 H1394 M1378 339.0 H1394 M1378 341.8 H1394 M1378 344.6 H1394 M1378 347.4 H1394" stroke="#202020" stroke-width="1.5"/>
<use href="#ofold" x="1657" y="334.7"/>
</svg>
<div class="t" style="left:45px;top:4.2px;font-weight:bold;letter-spacing:-0.45px">Parts</div>
<div class="t" style="left:81.5px;top:22.2px;width:238.5px;overflow:hidden">Cuts of seat (repaired)</div>
<div class="t" style="left:81.5px;top:40.2px;width:238.5px;overflow:hidden">Cuts of seat (repaired) (Cut 2)</div>
<div class="t" style="left:81.5px;top:58.2px;width:238.5px;overflow:hidden">Cuts of seat (repaired) (Cut 2) (Cut 2)</div>
<div class="t" style="left:81.5px;top:76.2px;width:238.5px;overflow:hidden">Cuts of seat (repaired) (Cut 2) (Cut 2) (Cut 2)</div>
<div class="t" style="left:81.5px;top:94.2px;width:238.5px;overflow:hidden">Cuts of seat (repaired) (Cut 2) (Cut 2) (Cut 2) (Cut 2)</div>
<div class="t" style="left:81.5px;top:112.2px;width:238.5px;overflow:hidden">Cuts of seat (repaired) (Cut 2) (Cut 2) (Cut 2) (Cut 2)</div>
<div class="t" style="left:81.5px;top:130.2px;width:238.5px;overflow:hidden">Cuts of seat (repaired) (Cut 2) (Cut 2) (Cut 2)</div>
<div class="t" style="left:81.5px;top:148.2px;width:238.5px;overflow:hidden">Cuts of seat (repaired) (Cut 2) (Cut 2) (Cut 2) (Cut 2)</div>
<div class="t" style="left:99.3px;top:166.2px;width:220.7px;overflow:hidden">seat (repaired) (Cut 2) (Cut 2) (Cut 2) (Cut 2)</div>
<div class="t" style="left:99.3px;top:184.2px;width:220.7px;overflow:hidden">seat (repaired) (Cut 2) (Cut 2) (Cut 2) (Cut 2)</div>
<div class="t" style="left:81.5px;top:202.2px;width:238.5px;overflow:hidden">Cuts of seat (repaired) (Cut 2) (Cut 2) (Cut 2) (Cut 2)</div>
<div class="t" style="left:81.5px;top:220.2px;width:238.5px;overflow:hidden">Cuts of seat (repaired) (Cut 2) (Cut 2) (Cut 2) (Cut 2)</div>
<div class="t" style="left:81.5px;top:238.2px;width:238.5px;overflow:hidden">Cuts of seat (repaired) (Cut 2) (Cut 2) (Cut 2) (Cut 2)</div>
<div class="t" style="left:45px;top:256.2px;font-weight:bold;letter-spacing:-0.65px">Slices</div>
<svg class="abs" style="left:298px;top:0" width="23" height="260" viewBox="1653 79 23 260">
<use href="#redx" x="1664" y="107.7"/>
<use href="#redx" x="1664" y="125.7"/>
<use href="#redx" x="1664" y="143.7"/>
<use href="#redx" x="1664" y="161.7"/>
<use href="#redx" x="1664" y="179.7"/>
<use href="#redx" x="1664" y="197.7"/>
<use href="#redx" x="1664" y="215.7"/>
<use href="#redx" x="1664" y="233.7"/>
<use href="#redx" x="1664" y="251.7"/>
<use href="#redx" x="1664" y="269.7"/>
<use href="#redx" x="1664" y="287.7"/>
<use href="#redx" x="1664" y="305.7"/>
<use href="#redx" x="1664" y="323.7"/>
</svg>
</div>
<div class="abs" style="left:29px;top:530px;width:1px;height:379px;background:#fff"></div>
<div class="grp" style="left:33px;top:542px;width:315px;height:148px"><b>Cuts</b></div>
<div class="s" style="left:43px;top:557.7px;">X:</div>
<div class="abs" style="left:59.0px;top:557.2px;width:24px;height:14px;border:1.6px solid #ff8c10;border-radius:3.5px;background:#e3e3e7"></div>
<div class="abs" style="left:91px;top:557.0px;width:172px;height:16px;background:linear-gradient(180deg,#ededed,#e9e9e9 15%,#eaeaea 85%,#eeeeee);"></div>
<div class="abs" style="left:91px;top:557.0px;width:17px;height:16px;background:#e6e6e6"></div>
<svg class="abs" style="left:91px;top:556.2px" width="172" height="16"><path d="M10 4.5 V11.5 L6.5 8 Z M161.5 4.5 V11.5 L165 8 Z" fill="#303030"/></svg>
<div class="abs" style="left:136.0px;top:556.7px;width:15px;height:15px;border:1px solid #8a8a8a;border-radius:2.5px;background:linear-gradient(180deg,#f6f6f6 0,#ececec 48%,#d4d4d4 52%,#cccccc 100%);box-shadow:inset 0 0 0 1px rgba(255,255,255,.7)"></div>
<div class="inp" style="left:270px;top:554.2px;width:44px;height:21px;text-align:left;padding-left:5px">0.00</div>
<div class="s" style="left:318px;top:557.7px">mm</div>
<div class="s" style="left:43px;top:583.7px;color:#7a6848">Y:</div>
<div class="abs" style="left:59.0px;top:583.2px;width:24px;height:14px;border:1.6px solid #ff8c10;border-radius:3.5px;background:#e3e3e7"></div>
<div class="abs" style="left:91px;top:583.0px;width:172px;height:16px;background:linear-gradient(180deg,#ededed,#e9e9e9 15%,#eaeaea 85%,#eeeeee);"></div>
<div class="abs" style="left:91px;top:583.0px;width:17px;height:16px;background:#e6e6e6"></div>
<svg class="abs" style="left:91px;top:582.2px" width="172" height="16"><path d="M10 4.5 V11.5 L6.5 8 Z M161.5 4.5 V11.5 L165 8 Z" fill="#303030"/></svg>
<div class="abs" style="left:168.5px;top:582.7px;width:15px;height:15px;border:1px solid #8a8a8a;border-radius:2.5px;background:linear-gradient(180deg,#f6f6f6 0,#ececec 48%,#d4d4d4 52%,#cccccc 100%);box-shadow:inset 0 0 0 1px rgba(255,255,255,.7)"></div>
<div class="inp" style="left:270px;top:580.2px;width:44px;height:21px;text-align:left;padding-left:5px">0.00</div>
<div class="s" style="left:318px;top:583.7px">mm</div>
<div class="s" style="left:43px;top:609.7px;">Z:</div>
<div class="abs" style="left:59.0px;top:609.2px;width:24px;height:14px;border:1.6px solid #ff8c10;border-radius:3.5px;background:#e3e3e7"></div>
<div class="abs" style="left:91px;top:609.0px;width:172px;height:16px;background:linear-gradient(180deg,#ededed,#e9e9e9 15%,#eaeaea 85%,#eeeeee);"></div>
<div class="abs" style="left:91px;top:609.0px;width:17px;height:16px;background:#e6e6e6"></div>
<svg class="abs" style="left:91px;top:608.2px" width="172" height="16"><path d="M10 4.5 V11.5 L6.5 8 Z M161.5 4.5 V11.5 L165 8 Z" fill="#303030"/></svg>
<div class="abs" style="left:108.5px;top:608.7px;width:15px;height:15px;border:1px solid #8a8a8a;border-radius:2.5px;background:linear-gradient(180deg,#f6f6f6 0,#ececec 48%,#d4d4d4 52%,#cccccc 100%);box-shadow:inset 0 0 0 1px rgba(255,255,255,.7)"></div>
<div class="inp" style="left:270px;top:606.2px;width:44px;height:21px;text-align:left;padding-left:5px">0.00</div>
<div class="s" style="left:318px;top:609.7px">mm</div>
<div class="abs" style="left:43px;top:634px;width:295px;height:22px;border:1px solid #707070;border-radius:3px;background:linear-gradient(180deg,#f4f4f4 0,#ebebeb 48%,#dddddd 52%,#cfcfcf 100%);box-shadow:inset 0 0 0 1px rgba(255,255,255,.75)"><div class="s" style="left:3px;top:3.5px">Cut all parts</div><svg class="abs" style="left:280px;top:8px" width="9" height="6"><path d="M0.5 0.8 H7.8 L4.1 4.8 Z" fill="#000"/></svg></div>
<div class="abs" style="left:105px;top:661px;width:112px;height:20px;border:1px solid #adb2b5;border-radius:3px;background:#f4f4f4;box-shadow:inset 0 0 0 1px #fcfcfc;text-align:center;font-size:10.8px;letter-spacing:-0.15px;line-height:18px;color:#838383">Execute cut</div>
<div class="abs" style="left:226px;top:661px;width:112px;height:20px;border:1px solid #707070;border-radius:3px;background:linear-gradient(180deg,#f4f4f4 0,#ebebeb 48%,#dddddd 52%,#cfcfcf 100%);box-shadow:inset 0 0 0 1px rgba(255,255,255,.75);text-align:center;font-size:10.8px;letter-spacing:-0.15px;line-height:18px;color:#000">Reset</div>
<div class="grp" style="left:33px;top:698px;width:315px;height:88px"><b>Information</b></div>
<div class="s" style="left:43px;top:713.7px">Length:</div>
<div class="inp" style="left:87px;top:709.7px;width:53px;height:21px;border-radius:2px">127.15</div>
<div class="s" style="left:147px;top:713.7px">mm</div>
<div class="s" style="left:181px;top:713.7px">Volume:</div>
<div class="inp" style="left:251px;top:709.7px;width:63px;height:21px;border-radius:2px">1106.88</div>
<div class="s" style="left:317px;top:713.7px">cm³</div>
<div class="s" style="left:43px;top:737.7px">Width:</div>
<div class="inp" style="left:87px;top:733.7px;width:53px;height:21px;border-radius:2px">128.00</div>
<div class="s" style="left:147px;top:737.7px">mm</div>
<div class="s" style="left:181px;top:737.7px">Area:</div>
<div class="inp" style="left:251px;top:733.7px;width:63px;height:21px;border-radius:2px">677.81</div>
<div class="s" style="left:317px;top:737.7px">cm²</div>
<div class="s" style="left:43px;top:761.7px">Height:</div>
<div class="inp" style="left:87px;top:757.7px;width:53px;height:21px;border-radius:2px">98.67</div>
<div class="s" style="left:147px;top:761.7px">mm</div>
<div class="s" style="left:181px;top:761.7px">Triangles:</div>
<div class="inp" style="left:251px;top:757.7px;width:63px;height:21px;border-radius:2px">2916</div>
<div class="s" style="left:317px;top:761.7px"></div>
<div class="abs" style="left:33px;top:794px;width:315px;height:22px;border:1px solid #a0a0a0;border-top-color:#e3e3e3;border-left-color:#e3e3e3;text-align:center;font-size:11px;line-height:18.5px;letter-spacing:0px">1 of 10 parts is selected. (9 are hidden)</div>
<div class="abs" style="left:103px;top:842px;width:172px;height:39px;border-radius:12px;background:linear-gradient(180deg,#045a9e 0,#04508f 45%,#033f78 70%,#03386c 100%);color:#fff;font-style:italic;font-size:21px;line-height:38px;text-align:center;letter-spacing:0.2px">Upgrade now!</div>
<div class="abs" style="left:352px;top:0;width:3px;height:910px;background:#fcfcfc"></div>
<div class="abs" style="left:352px;top:530px;width:1px;height:380px;background:#9c9c9c"></div>
<div class="abs" style="left:354px;top:0;width:1px;height:911px;background:#a4a4a4"></div>
<div class="abs" style="left:5px;top:909px;width:348px;height:1px;background:#a0a0a0"></div>
</div>
<div id="status">
<div class="abs" style="left:0;top:0;width:1680px;height:1px;background:#9a9a9a"></div>
<div class="abs" style="left:1325px;top:0;width:355px;height:1px;background:#f0f0f0"></div>
<div class="abs" style="left:0;top:1px;width:1680px;height:1px;background:#fff"></div>
<div class="abs" style="left:0;top:22px;width:1680px;height:1px;background:#fff"></div>
<svg class="abs" style="left:2px;top:5px" width="13" height="13" viewBox="0 0 14 14"><path d="M4.2 0.5 H9.8 L13.5 4.2 V9.8 L9.8 13.5 H4.2 L0.5 9.8 V4.2 Z" fill="#ff0000"/></svg>
<div class="abs" style="left:16px;top:2px;width:1px;height:19px;background:#d8d8dc"></div>
<div class="abs" style="left:216px;top:2px;width:1px;height:19px;background:#c8c8cc"></div>
<div class="abs" style="left:716px;top:2px;width:1px;height:19px;background:#c8c8cc"></div>
<div class="abs" style="left:21px;top:5.5px;font-size:10.9px;line-height:13px;white-space:nowrap">rotate/move</div>
<div class="abs" style="left:221px;top:5.5px;font-size:10.9px;line-height:13px;white-space:nowrap">move and rotate the selected parts by the mouse and the cursor keys</div>
<div class="abs" style="left:744px;top:9px;width:908px;height:10px;border:1px solid #b4b4b4;border-radius:2px;background:linear-gradient(180deg,#f2f2f2 0,#dadada 45%,#cccccc 55%,#d6d6d6 100%)"></div>
<svg class="abs" style="left:1668px;top:11px" width="10" height="10"><path d="M8 2 V3 M8 5 V6 M5 5 V6 M8 8 V9 M5 8 V9 M2 8 V9" stroke="#b8b8b8" stroke-width="1.5"/></svg>
</div>
<div id="taskbar">
<style>
#taskbar{background:linear-gradient(180deg,#0c0b0a 0,#6a6866 1px,#363432 2px,#2a2826 12px,#252321 40px)}
#taskbar .glow{position:absolute;left:0;top:0;width:1680px;height:40px;background:linear-gradient(100deg,rgba(0,0,0,.25) 0,rgba(0,0,0,.1) 14%,rgba(100,98,92,.3) 22%,rgba(110,108,100,.35) 33%,rgba(60,58,56,.2) 42%,rgba(40,38,36,.1) 55%,rgba(30,28,26,.1) 62%,rgba(120,120,115,.4) 67%,rgba(40,40,38,.15) 70%,rgba(70,68,62,.3) 80%,rgba(80,78,74,.3) 90%,rgba(60,58,56,.2) 100%)}
#taskbar .tb{position:absolute;top:1px;height:38px;width:58px;border:1px solid rgba(150,150,150,.75);border-radius:3px;background:linear-gradient(180deg,rgba(120,120,120,.55) 0,rgba(80,80,80,.5) 45%,rgba(45,45,45,.55) 50%,rgba(55,55,55,.5) 100%);box-shadow:inset 0 0 0 1px rgba(255,255,255,.12),0 0 0 1px rgba(0,0,0,.6)}
#taskbar .tb.act{background:linear-gradient(180deg,rgba(215,215,215,.8) 0,rgba(175,175,175,.75) 45%,rgba(140,140,140,.75) 50%,rgba(160,160,160,.75) 100%);border-color:rgba(230,230,230,.9)}
#taskbar .ad{position:absolute;top:5px;width:28px;height:26px;border:2px solid;font-weight:bold;font-size:16px;line-height:21px;text-align:center;letter-spacing:-0.5px}
</style>
<div class="glow"></div>
<div class="tb" style="left:60px"></div><div class="tb" style="left:184px"></div><div class="tb" style="left:246px"></div><div class="tb" style="left:556px"></div><div class="tb" style="left:742px"></div><div class="tb" style="left:804px"></div><div class="tb act" style="left:866px"></div>
<svg class="abs" style="left:0;top:0" width="1680" height="40" viewBox="0 1010 1680 40">
<defs>
<radialGradient id="orb" cx="0.5" cy="0.85" r="0.9"><stop offset="0" stop-color="#30d8ff"/><stop offset="0.35" stop-color="#1078b8"/><stop offset="0.7" stop-color="#0c4c84"/><stop offset="1" stop-color="#5890b8"/></radialGradient>
<linearGradient id="orbhi" x1="0" y1="0" x2="0" y2="1"><stop offset="0" stop-color="rgba(255,255,255,.75)"/><stop offset="1" stop-color="rgba(255,255,255,.1)"/></linearGradient>
<radialGradient id="itg" cx="0.5" cy="0.3" r="0.8"><stop offset="0" stop-color="#48a8f0"/><stop offset="1" stop-color="#1050b0"/></radialGradient>
<linearGradient id="f360" x1="0" y1="0" x2="1" y2="0"><stop offset="0" stop-color="#fff"/><stop offset="1" stop-color="#1890d8"/></linearGradient>
<linearGradient id="npg" x1="0" y1="0" x2="1" y2="1"><stop offset="0" stop-color="#c8f0ff"/><stop offset="0.5" stop-color="#70c0e0"/><stop offset="1" stop-color="#3890b8"/></linearGradient>
</defs>
<!-- start orb -->
<circle cx="27" cy="1029.5" r="18.5" fill="#18405c" stroke="#3c7ca8" stroke-width="1"/>
<circle cx="27" cy="1029.5" r="17.5" fill="url(#orb)"/>
<path d="M10.5 1026 A17 17 0 0 1 43.5 1026 C36 1030 18 1030 10.5 1026 Z" fill="url(#orbhi)" opacity="0.55"/>
<g transform="translate(27 1030) scale(1.25) translate(-26.3 -1029.5)"><path d="M20 1021 C22.5 1019.6 25 1019.6 27 1020.8 L25.5 1028.5 C23.5 1027.3 21 1027.3 18.3 1028.8 Z" fill="#f06020"/>
<path d="M28.6 1021.5 C31 1022.8 33.5 1022.6 36.4 1021 L34.6 1028.8 C32 1030.2 29.5 1030.2 27 1029 Z" fill="#80c040"/>
<path d="M18 1030.3 C20.5 1028.9 23 1028.9 25.2 1030.1 L23.6 1037.8 C21.5 1036.6 19 1036.6 16.2 1038.2 Z" fill="#40a0e8"/>
<path d="M26.7 1030.7 C29 1032 31.5 1031.8 34.3 1030.3 L32.6 1038 C30 1039.4 27.5 1039.4 25 1038.2 Z" fill="#f8c020"/></g>
<!-- chrome -->
<g><circle cx="89" cy="1029.5" r="14.5" fill="#e8c010"/>
<path d="M89 1029.5 L76.44 1022.25 A14.5 14.5 0 0 1 101.56 1022.25 Z" fill="#e03828"/>
<path d="M76.44 1022.25 A14.5 14.5 0 0 0 89 1044 L95.5 1033 L89 1029.5 Z" fill="#40b048"/>
<path d="M76.44 1022.25 L82.8 1033.2 L89 1029.5 Z" fill="#40b048"/>
<circle cx="89" cy="1029.5" r="6.8" fill="#f4f4f4"/><circle cx="89" cy="1029.5" r="5.4" fill="#4088d8"/>
<path d="M96 1036.8 C96 1032.4 102.6 1032.4 102.6 1036.8 C102.6 1038.6 102 1039.6 101.4 1040.6 L101.8 1043.2 L103.4 1045.8 H95.2 L96.8 1043.2 L97.2 1040.6 C96.6 1039.6 96 1038.6 96 1036.8 Z" fill="#fff"/></g>
<!-- explorer -->
<g><path d="M135.5 1020 H146 L148 1022 H166.5 V1043 H135.5 Z" fill="#e8cc70" stroke="#c8a840" stroke-width="0.8"/>
<rect x="138.5" y="1018.5" width="4" height="2.5" fill="#20b020"/><rect x="147" y="1019.5" width="3.5" height="2.5" fill="#d82020"/><rect x="155" y="1021.5" width="3.5" height="2.5" fill="#2080e0"/>
<path d="M143 1021 H153 V1024 H143 Z M151 1023 H164 V1026 H151 Z" fill="#fff" opacity="0.8"/>
<path d="M136 1026 H166 V1043 H136 Z" fill="#f4e090" stroke="#d0b050" stroke-width="0.6"/>
<path d="M139 1045 V1036 C139 1034 140 1033 142 1033 H160 C162 1033 163 1034 163 1036 V1045 H157.5 V1040 H144.5 V1045 Z" fill="#68b8e8" stroke="#2878b8" stroke-width="0.8"/>
<path d="M140.5 1036 H161.5 V1038 H140.5 Z" fill="#c0e4f8"/><path d="M143 1029 V1041 M138 1034.5 H148" stroke="#fff" stroke-width="0.8" opacity="0.9"/></g>
<!-- itunes -->
<g><circle cx="213" cy="1029.5" r="14.6" fill="#e8eef4"/><circle cx="213" cy="1029.5" r="12.6" fill="url(#itg)"/>
<path d="M210 1023.5 L219.5 1021.5 V1033.5 A2.8 2.2 0 1 1 217.7 1031.4 V1025.3 L211.8 1026.5 V1035.3 A2.8 2.2 0 1 1 210 1033.2 Z" fill="#d8dce4"/></g>
<!-- thunderbird -->
<g><circle cx="275.5" cy="1030" r="14" fill="#1c4c98"/>
<path d="M262.5 1036 C258.5 1026 263 1016.5 272 1015 C282 1013.5 291 1020 290.5 1030.5 C290 1039 284 1045 275 1045 C282 1041 285.5 1034 283 1027 C280.5 1021 272 1019.5 267 1024 C264 1027 263 1031.5 262.5 1036 Z" fill="#3c84d8"/>
<path d="M268 1017 C273 1013.5 281 1014.5 285.5 1019.5 C280 1017 274 1017.5 270 1021 Z" fill="#88c0f4"/>
<path d="M283.5 1022 C288 1028 287.5 1037 281 1042.5 C285 1036 285.5 1029 283.5 1022 Z" fill="#1c4c98"/>
<path d="M262.8 1031.5 L273.5 1024.8 L283.2 1030 L280.2 1041.2 L266.2 1042.6 Z" fill="#f4f0e8" stroke="#b0a898" stroke-width="0.6"/><path d="M262.8 1031.5 L272.8 1036.6 L283.2 1030 M266.2 1042.6 L271 1035.8 M280.2 1041.2 L274.6 1035.6" fill="none" stroke="#a09888" stroke-width="0.8"/>
<path d="M264.5 1022.5 C265 1019 268 1017 271 1017.5 C270 1020 268.5 1022.5 266.5 1025 Z" fill="#5098e0"/><path d="M263.2 1024 L266.8 1022.6 L266.2 1025.2 Z" fill="#f0b020"/><circle cx="267.6" cy="1020.8" r="0.9" fill="#fff"/><circle cx="267.7" cy="1020.9" r="0.5" fill="#101010"/></g>
<!-- openoffice -->
<g><circle cx="337" cy="1029.5" r="15.2" fill="#1890d8"/>
<path d="M331.5 1023.5 C334.5 1022.5 337 1023 339 1025 C341.5 1022.5 345 1021.8 349 1022.5 C345.5 1023 342.5 1024.5 340 1027.5 C338 1025 335 1024 331.5 1023.5 Z" fill="#fff"/>
<path d="M322.5 1033.5 C327 1032.5 331 1033.5 334 1036.5 C337.5 1032.5 343 1031 349.5 1032 C344 1033 339.5 1036 336 1041.5 C333 1037 328.5 1034.5 322.5 1033.5 Z" fill="#fff"/></g>
<!-- calc -->
<g><rect x="697.5" y="1015" width="22.5" height="29.5" rx="2" fill="#a8d4f0" stroke="#5898c8" stroke-width="0.8"/><rect x="699.5" y="1017" width="18.5" height="2" fill="#f0a020"/><rect x="699.5" y="1019.5" width="18.5" height="7" fill="#e8f4fc" stroke="#78a8d0" stroke-width="0.5"/><text x="716.5" y="1025.8" font-size="7" font-family="Liberation Mono, monospace" text-anchor="end" fill="#3858a0">0</text>
<g fill="#f4f8fc"><rect x="700" y="1029" width="3" height="2.6"/><rect x="704.3" y="1029" width="3" height="2.6"/><rect x="708.6" y="1029" width="3" height="2.6"/><rect x="712.9" y="1029" width="3" height="2.6"/><rect x="700" y="1033" width="3" height="2.6"/><rect x="704.3" y="1033" width="3" height="2.6"/><rect x="708.6" y="1033" width="3" height="2.6"/><rect x="712.9" y="1033" width="3" height="2.6"/><rect x="700" y="1037" width="3" height="2.6"/><rect x="704.3" y="1037" width="3" height="2.6"/><rect x="708.6" y="1037" width="3" height="2.6"/><rect x="700" y="1041" width="3" height="2.4"/><rect x="704.3" y="1041" width="3" height="2.4"/><rect x="708.6" y="1041" width="3" height="2.4"/></g><rect x="713.4" y="1037" width="3" height="6.4" fill="#f0a020"/></g>
<!-- notepad -->
<g><path d="M766 1020 L783 1023 L782 1046 L774 1048 L757 1042 Z" fill="#d8dce0"/><path d="M781 1024 L784.5 1026 L783.5 1045 L780 1047 Z" fill="#c09030"/>
<path d="M767 1019 L783 1022.5 L773 1046.5 L756 1041 Z" fill="url(#npg)" stroke="#4890b0" stroke-width="0.5"/><path d="M766 1017.5 L784 1021.5" stroke="#a0a8b0" stroke-width="2.2" stroke-dasharray="1 1"/>
<path d="M773 1046.5 L783 1022.5 L782 1044 Z" fill="#eef4f8"/></g>
<!-- fusion 360 -->
<g><rect x="817" y="1014" width="32" height="31.5" fill="#f4e4d8"/><path d="M817 1014 H849 V1040 H817 Z" fill="#f0dccc"/><path d="M817 1040 L833 1026 L849 1040 Z" fill="#e8ccb4" opacity="0.7"/>
<path d="M828 1021 L834 1016.5 L842 1019 V1024 L834 1027 V1029.5 L841 1028 V1033 L834 1036 V1043 L828 1040 Z" fill="#e88820"/><path d="M828 1021 L834 1024 V1043 L828 1040 Z" fill="#c86810"/><path d="M834 1016.5 L842 1019 L834 1024 L828 1021 Z" fill="#f8a840"/>
<rect x="817" y="1039.5" width="32" height="6" fill="url(#f360)"/><text x="848" y="1045" font-size="6.5" font-weight="bold" font-family="Liberation Sans, sans-serif" text-anchor="end" fill="#fff">360</text></g>
<!-- netfabb -->
<g><rect x="-5.2" y="-3.9" width="10.4" height="7.8" rx="2" fill="#e0108c" transform="translate(895.3 1028) rotate(-22)"/>
<g fill="#0c58a8"><rect x="-4.3" y="-2.6" width="8.6" height="5.2" rx="1.3" transform="translate(899.6 1018.8) rotate(22)"/><rect x="-3.3" y="-4" width="6.6" height="8" rx="1.3" transform="translate(883.5 1027) rotate(24)"/><rect x="-3.6" y="-4.2" width="7.2" height="8.4" rx="1.3" transform="translate(906.7 1031.4) rotate(18)"/><rect x="-4.3" y="-3.7" width="8.6" height="7.4" rx="1.3" transform="translate(890.4 1040) rotate(-32)"/></g></g>
<!-- tray -->
<g><path d="M1336 1024 H1342 L1347 1032.5 H1341 Z" fill="#f8c820"/><path d="M1336 1024 L1330.7 1033 L1333.7 1037.8 L1339 1029 Z" fill="#18a060"/><path d="M1336.2 1033 H1347 L1344 1037.8 H1333.7 Z" fill="#3878e8"/></g>
<g><path d="M1362 1023 H1366 L1371.2 1038 H1367 Z" fill="#1878c8"/><path d="M1362 1023 L1355 1035 L1359 1035 L1364 1027 Z" fill="#78a830"/><path d="M1355 1035 L1357 1038 L1367 1034.5 L1365.5 1031.5 Z" fill="#18a0a8"/></g>
<g><path d="M1380 1029 H1394 V1038.5 H1380 Z" fill="#f4f4f4" stroke="#c0c0c0" stroke-width="0.6"/><path d="M1380 1029 L1387 1034.5 L1394 1029 M1380 1038.5 L1385.5 1033.5 M1394 1038.5 L1388.5 1033.5" fill="none" stroke="#a0a0a0" stroke-width="0.8"/><circle cx="1387" cy="1027.5" r="4" fill="#18a018"/><path d="M1387 1024.8 V1029 M1385 1027.5 L1387 1029.8 L1389 1027.5" stroke="#fff" stroke-width="1.3" fill="none"/></g>
<g><ellipse cx="1411.5" cy="1030" rx="4.2" ry="8" transform="rotate(-40 1411.5 1030)" fill="#101010" stroke="#c8c8c8" stroke-width="1"/><path d="M1408.5 1031 L1405 1038 H1411 Z" fill="#d0d0d0"/><circle cx="1408.8" cy="1031.5" r="1.4" fill="#e8e8e8"/></g>
<g><rect x="1428.5" y="1023" width="5.5" height="4" fill="#b0b0b0"/><path d="M1427.5 1027 H1435 V1033 C1435 1035 1433 1035.5 1432.3 1035.5 V1038.5 H1430.2 V1035.5 C1429.5 1035.5 1427.5 1035 1427.5 1033 Z" fill="#8c8c8c"/><circle cx="1438.5" cy="1034" r="4.6" fill="#18a018"/><path d="M1436.2 1034 L1438 1036.2 L1440.8 1031.8" stroke="#fff" stroke-width="1.3" fill="none"/></g>
<g><rect x="1451" y="1023.5" width="14.5" height="13" fill="#30c030"/><path d="M1453 1029 L1456 1025 H1462 L1464 1029 V1032 H1453 Z" fill="#f4f4f4" stroke="#606060" stroke-width="0.5"/><circle cx="1455.5" cy="1030.5" r="0.8" fill="#e02020"/><circle cx="1458" cy="1030.5" r="0.8" fill="#2040e0"/><circle cx="1462.5" cy="1034" r="4.3" fill="#18a018" stroke="#fff" stroke-width="0.9"/><path d="M1460.3 1034 L1462 1036 L1464.8 1031.8" stroke="#fff" stroke-width="1.2" fill="none"/></g>
<g><rect x="1475.5" y="1023" width="15" height="15.5" rx="1" fill="#2c3440"/><rect x="1477" y="1026.5" width="12.5" height="9.5" fill="#78b818"/><path d="M1479 1031.5 C1481 1028 1486 1028 1488 1031 C1486 1034 1482 1035 1479.5 1033 C1481 1030.5 1484 1030 1485.5 1031.5 C1484.5 1033 1483 1033 1482 1032" fill="none" stroke="#38600c" stroke-width="0.9"/></g>
<g><path d="M1499 1031 L1506.5 1026 L1514 1031 V1038 H1499 Z" fill="#f89808"/><path d="M1506 1022.8 V1027" stroke="#f8b030" stroke-width="1"/><path d="M1506.5 1022.8 H1511.5 V1025.3 H1506.5 Z" fill="#f8b030"/><path d="M1506.6 1029 V1033.5 M1506.6 1035 V1036.6" stroke="#fff" stroke-width="1.6"/></g>
<g><path d="M1524.5 1024 V1038" stroke="#f0f0f0" stroke-width="1.4"/><path d="M1525.5 1024.5 H1531.5 V1026.5 L1538 1026 L1535 1029 L1536 1031.5 H1531 V1030 H1525.5 Z" fill="#f4f4f4"/></g>
<g fill="none" stroke="#f0f0f0" stroke-width="1.2"><rect x="1552" y="1026.5" width="10" height="8.5"/><path d="M1553.5 1038 H1560.5 M1557 1035 V1038"/><path d="M1548.5 1023.5 V1027 H1553 V1023.5 M1550.8 1027 V1036.5 H1553"/></g>
<g><path d="M1571.5 1028 H1574.5 L1578.5 1024 V1038 L1574.5 1034 H1571.5 Z" fill="#f0f0f0"/><path d="M1580.5 1028.5 C1582 1030 1582 1032 1580.5 1033.5 M1582.8 1026.5 C1585.3 1029 1585.3 1033 1582.8 1035.5 M1585 1024.8 C1588.4 1028 1588.4 1034 1585 1037.2" fill="none" stroke="#e8e8e8" stroke-width="1.1"/></g>
</svg>
<div class="ad" style="left:385px;border-color:#d898ff;background:#1c1248;color:#d8a0ff">Ae</div>
<div class="ad" style="left:447px;border-color:#ffa428;background:#2c1808;color:#ffac38">Ai</div>
<div class="ad" style="left:509px;border-color:#40e0b0;background:#0c2824;color:#48e4b8">Au</div>
<div class="ad" style="left:571px;border-color:#80c0ff;background:#14105c;color:#88c4ff">Ps</div>
<div class="ad" style="left:633px;border-color:#e868f8;background:#2a0c38;color:#ec78fc">Pr</div>
<div class="abs" style="left:1600px;top:7px;width:60px;text-align:center;font-size:11.5px;line-height:13px;color:#fff;white-space:nowrap">8:32 PM</div>
<div class="abs" style="left:1600px;top:24px;width:60px;text-align:center;font-size:11.5px;line-height:13px;color:#fff;white-space:nowrap">4/19/2015</div>
<div class="abs" style="left:1666px;top:1px;width:14px;height:39px;border:1px solid rgba(160,160,160,.7);border-right:none;border-radius:2px 0 0 2px;background:linear-gradient(180deg,rgba(170,170,170,.6),rgba(110,110,110,.5) 45%,rgba(60,60,60,.5) 50%,rgba(70,70,70,.5))"></div>
</div>
</body></html>
